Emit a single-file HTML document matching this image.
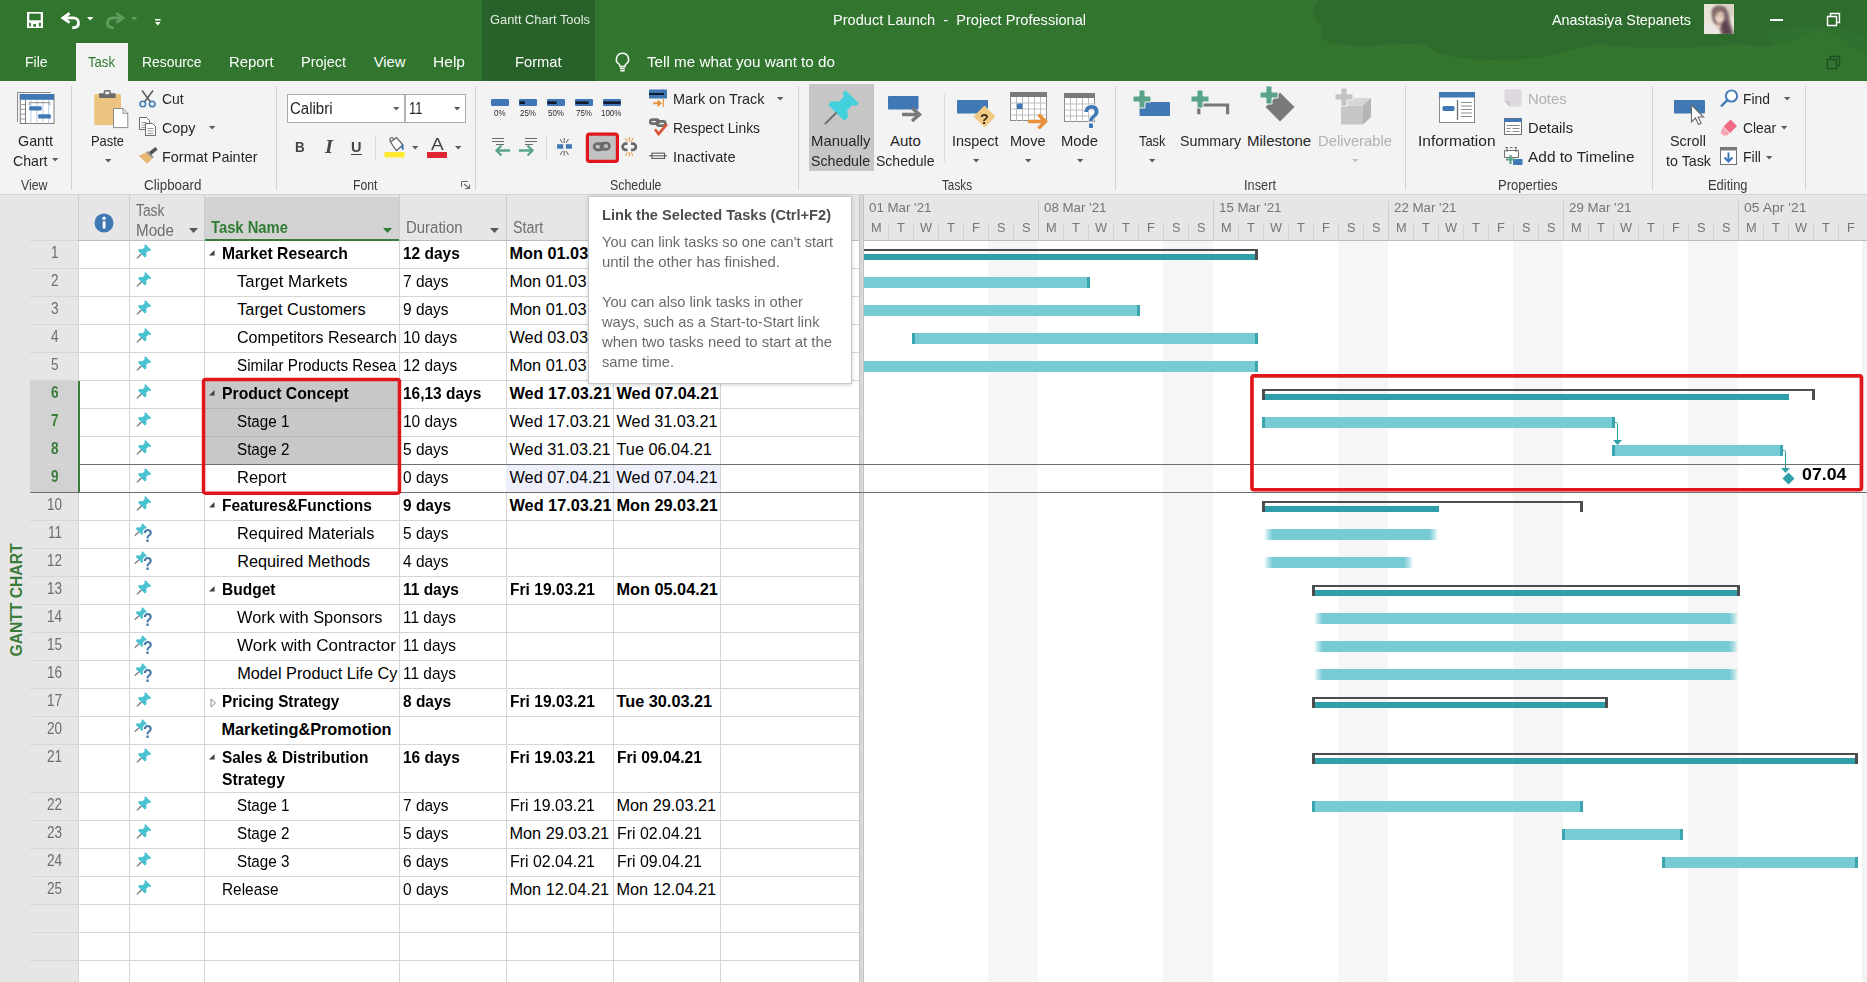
<!DOCTYPE html>
<html lang="en"><head><meta charset="utf-8"><title>Product Launch - Project Professional</title><style>
html,body{margin:0;padding:0;}
body{width:1867px;height:982px;overflow:hidden;position:relative;background:#fff;font-family:"Liberation Sans",sans-serif;}
.b{position:absolute;display:block;}
.t{position:absolute;white-space:pre;line-height:1;transform-origin:0 50%;display:block;}
</style></head><body>
<div class="b" style="left:0px;top:0px;width:1867px;height:81px;background:#31752f;"></div>
<div class="b" style="left:0px;top:81px;width:1867px;height:113px;background:#f3f3f3;"></div>
<div class="b" style="left:0px;top:194px;width:1867px;height:1px;background:#d2d2d2;"></div>
<div class="b" style="left:0px;top:195px;width:1867px;height:787px;background:#e6e6e6;"></div>
<svg class="b" style="left:1300px;top:0px;" width="567" height="81" viewBox="0 0 567 81">
<path d="M18 0 C10 10 14 22 24 26 C16 34 22 44 40 44 C70 50 100 40 128 46 C140 60 190 62 236 58 C262 54 280 46 300 44 C340 50 400 48 440 44 C470 50 500 40 520 30 C540 36 556 52 567 58 L567 0Z" fill="#2c692b" opacity=".72"/>
<path d="M470 30 C500 24 540 26 567 36 L567 60 C540 50 500 56 480 46 C468 40 464 34 470 30Z" fill="#31752f" opacity=".5"/>
</svg>
<div class="b" style="left:482px;top:0px;width:113px;height:81px;background:#28612a;"></div>
<span class="t" style="left:489.5px;top:13.1px;font-size:13.6px;color:#e3efe3;transform:scaleX(0.9472);">Gantt Chart Tools</span>
<span class="t" style="left:833.0px;top:11.9px;font-size:15px;color:#fff;transform:scaleX(0.9726);">Product Launch  -  Project Professional</span>
<span class="t" style="left:1552.0px;top:11.9px;font-size:15px;color:#fff;transform:scaleX(0.9581);">Anastasiya Stepanets</span>
<svg class="b" style="left:1704px;top:4px;" width="30" height="30" viewBox="0 0 30 30">
<rect width="30" height="30" fill="#e9e3d6"/>
<g><g style="filter:blur(.8px)">
<rect x="20" y="0" width="10" height="12" fill="#d9d2c2"/>
<path d="M8 6 C9 1 20 -1 23 6 C26 12 25 18 28 24 L30 31 L16 31 C17 26 15 22 12 21 C8 18 7 11 8 6Z" fill="#7d6468"/>
<path d="M17 22 C19 25 20 28 19 31 L27 31 C26 26 24 20 22 16Z" fill="#5a4350"/>
<ellipse cx="15.500" cy="13" rx="4.600" ry="6.300" fill="#ecd2c0"/>
<path d="M10 7 C12 4 18 4 21 8 C18 7 13 8 11 12Z" fill="#8d7370"/>
<path d="M0 20 C4 17 9 19 12 22 C15 24 17 27 17 31 L0 31Z" fill="#ebe6e1"/>
<path d="M11 19 C13 21 16 21 17 20 L17 24 L12 23Z" fill="#e3c4b2"/>
<path d="M12.500 11.500h2M16.500 11.500h2" stroke="#5a4040" stroke-width="0.800"/>
</g></g></svg>
<div class="b" style="left:1770px;top:19px;width:13px;height:1.5px;background:#fff;"></div>
<svg class="b" style="left:1826px;top:12px;" width="15" height="15" viewBox="0 0 15 15"><path d="M1.5 4.5h9v9h-9z M4.5 4.5v-3h9v9h-3" fill="none" stroke="#fff" stroke-width="1.4"/></svg>
<svg class="b" style="left:1826px;top:55px;" width="15" height="15" viewBox="0 0 15 15"><path d="M1.5 4.5h9v9h-9z M4.5 4.5v-3h9v9h-3" fill="none" stroke="#1f4f20" stroke-width="1.4"/></svg>
<svg class="b" style="left:27px;top:12px;" width="16" height="16" viewBox="0 0 16 16"><rect width="16" height="16" fill="#fff"/><rect x="2.300" y="1.600" width="11.400" height="6.700" fill="#31752f"/><rect x="2.100" y="10.700" width="1.800" height="3.700" fill="#31752f"/><rect x="11.800" y="10.700" width="2.100" height="3.700" fill="#31752f"/><rect x="6.300" y="12.100" width="2.700" height="2.700" fill="#31752f"/></svg>
<svg class="b" style="left:60px;top:12px;" width="22" height="18" viewBox="0 0 22 18"><path d="M9.600 1.200 L3 5.900 L9.600 10.600" fill="none" stroke="#fff" stroke-width="2.900" stroke-linejoin="miter"/><path d="M3.500 5.900H13.500a5 5 0 0 1 5 5c0 3-2.500 4.800-6.200 4.800" fill="none" stroke="#fff" stroke-width="2.900"/></svg>
<svg class="b" style="left:87px;top:17px;" width="7" height="4" viewBox="0 0 7 4"><path d="M0 0h6.400l-3.200 3.400z" fill="#fff"/></svg>
<svg class="b" style="left:104px;top:12px;" width="22" height="18" viewBox="0 0 22 18"><path d="M12.400 1.200 L19 5.900 L12.400 10.600" fill="none" stroke="#5f9d5e" stroke-width="2.900"/><path d="M18.500 5.900H8.500a5 5 0 0 0 -5 5c0 3 2.500 4.800 6.200 4.800" fill="none" stroke="#5f9d5e" stroke-width="2.900"/></svg>
<svg class="b" style="left:131px;top:17px;" width="7" height="4" viewBox="0 0 7 4"><path d="M0 0h6.400l-3.200 3.400z" fill="#5f9d5e"/></svg>
<svg class="b" style="left:154.5px;top:18.8px;" width="7" height="8" viewBox="0 0 7 8"><path d="M0 0h5.600v1.400h-5.600z M0 3h5.600l-2.800 3.400z" fill="#fff"/></svg>
<div class="b" style="left:76px;top:43px;width:52px;height:38px;background:#f3f3f3;"></div>
<span class="t" style="left:25.0px;top:54.5px;font-size:14.8px;color:#fff;transform:scaleX(0.9435);">File</span>
<span class="t" style="left:88.0px;top:54.5px;font-size:14.8px;color:#2f7a32;transform:scaleX(0.8873);">Task</span>
<span class="t" style="left:142.0px;top:54.5px;font-size:14.8px;color:#fff;transform:scaleX(0.9394);">Resource</span>
<span class="t" style="left:229.0px;top:54.5px;font-size:14.8px;color:#fff;transform:scaleX(1.0063);">Report</span>
<span class="t" style="left:301.0px;top:54.5px;font-size:14.8px;color:#fff;transform:scaleX(0.9770);">Project</span>
<span class="t" style="left:373.7px;top:54.5px;font-size:14.8px;color:#fff;">View</span>
<span class="t" style="left:433.0px;top:54.5px;font-size:14.8px;color:#fff;transform:scaleX(1.0513);">Help</span>
<span class="t" style="left:514.5px;top:54.5px;font-size:14.8px;color:#fff;transform:scaleX(0.9922);">Format</span>
<span class="t" style="left:646.5px;top:54.5px;font-size:14.8px;color:#fff;transform:scaleX(1.0295);">Tell me what you want to do</span>
<svg class="b" style="left:614px;top:52px;" width="17" height="21" viewBox="0 0 17 21"><path d="M8.5 1.2a6 6 0 0 0-3.4 11c.7.6 1 1.3 1 2.3h4.8c0-1 .3-1.7 1-2.3a6 6 0 0 0-3.4-11z" fill="none" stroke="#fff" stroke-width="1.5"/><path d="M6 16.5h5M6.3 18.8h4.4" stroke="#fff" stroke-width="1.4"/></svg>
<div class="b" style="left:71px;top:86px;width:1px;height:104px;background:#d4d4d4;"></div>
<div class="b" style="left:276px;top:86px;width:1px;height:104px;background:#d4d4d4;"></div>
<div class="b" style="left:475px;top:86px;width:1px;height:104px;background:#d4d4d4;"></div>
<div class="b" style="left:798px;top:86px;width:1px;height:104px;background:#d4d4d4;"></div>
<div class="b" style="left:1115px;top:86px;width:1px;height:104px;background:#d4d4d4;"></div>
<div class="b" style="left:1405px;top:86px;width:1px;height:104px;background:#d4d4d4;"></div>
<div class="b" style="left:1652px;top:86px;width:1px;height:104px;background:#d4d4d4;"></div>
<div class="b" style="left:1805px;top:86px;width:1px;height:104px;background:#d4d4d4;"></div>
<div class="b" style="left:375px;top:135px;width:1px;height:26px;background:#dcdcdc;"></div>
<div class="b" style="left:546px;top:135px;width:1px;height:26px;background:#dcdcdc;"></div>
<div class="b" style="left:944px;top:94px;width:1px;height:68px;background:#dcdcdc;"></div>
<span class="t" style="left:21.0px;top:177.9px;font-size:14.3px;color:#3b3b3b;transform:scaleX(0.8622);">View</span>
<span class="t" style="left:144.0px;top:177.9px;font-size:14.3px;color:#3b3b3b;transform:scaleX(0.9395);">Clipboard</span>
<span class="t" style="left:353.0px;top:177.9px;font-size:14.3px;color:#3b3b3b;transform:scaleX(0.8563);">Font</span>
<span class="t" style="left:610.0px;top:177.9px;font-size:14.3px;color:#3b3b3b;transform:scaleX(0.8637);">Schedule</span>
<span class="t" style="left:941.5px;top:177.9px;font-size:14.3px;color:#3b3b3b;transform:scaleX(0.8207);">Tasks</span>
<span class="t" style="left:1244.0px;top:177.9px;font-size:14.3px;color:#3b3b3b;transform:scaleX(0.8948);">Insert</span>
<span class="t" style="left:1498.0px;top:177.9px;font-size:14.3px;color:#3b3b3b;transform:scaleX(0.9130);">Properties</span>
<span class="t" style="left:1708.0px;top:177.9px;font-size:14.3px;color:#3b3b3b;transform:scaleX(0.9034);">Editing</span>
<svg class="b" style="left:461px;top:181px;" width="10" height="9" viewBox="0 0 10 9"><path d="M0.500 6V0.500H7" fill="none" stroke="#6a6a6a"/><path d="M3 3L8.500 7.500M8.500 3.600V7.500H4.200" fill="none" stroke="#6a6a6a" stroke-width="1.100"/></svg>
<svg class="b" style="left:17px;top:92px;" width="38" height="33" viewBox="0 0 38 33"><path d="M0.500 30V0.500H33.500" fill="none" stroke="#8b8b8b"/>
<rect x="3.300" y="2.500" width="33.700" height="29" fill="#fff" stroke="#7c7c7c"/>
<rect x="2.800" y="2" width="34.200" height="5.800" fill="#3f78b5"/>
<path d="M13.900 8v23.500M19.900 8v23.500M25.900 8v23.500M31.700 8v23.500" stroke="#b4cbe6" fill="none"/>
<path d="M3.500 12.600h5M3.500 17.400h5M3.500 22.200h5M3.500 27h5" stroke="#9a9a9a" fill="none"/><path d="M8.500 8v23.500" stroke="#7c7c7c"/>
<path d="M12.200 13.200V10.700H32.800V13.200" fill="none" stroke="#8b8b8b"/>
<rect x="12.200" y="14.300" width="12.500" height="4.100" rx="1.200" fill="#3f78b5"/><rect x="21.200" y="22.200" width="12.700" height="4.400" rx="1.200" fill="#3f78b5"/></svg>
<span class="t" style="left:18.0px;top:133.3px;font-size:15px;color:#262626;transform:scaleX(0.9541);">Gantt</span>
<span class="t" style="left:13.0px;top:152.8px;font-size:15px;color:#262626;transform:scaleX(0.9406);">Chart</span>
<svg class="b" style="left:52px;top:158px;" width="7" height="4" viewBox="0 0 7 4"><path d="M0 0h6.4l-3.2 3.4z" fill="#5b5b5b"/></svg>
<svg class="b" style="left:93px;top:89px;" width="36" height="40" viewBox="0 0 36 40"><rect x="1.300" y="5.100" width="26.700" height="31" rx="1.500" fill="#ecc37f"/><rect x="6" y="4.200" width="16.700" height="4.800" rx="0.800" fill="#6d6d6d"/><rect x="11.500" y="1.700" width="5.400" height="4.300" rx="0.800" fill="#f3f3f3" stroke="#6d6d6d" stroke-width="1.500"/>
<path d="M20.500 19.500h9.500l4.800 4.800v14.300h-14.300z" fill="#fff" stroke="#8a8a8a"/><path d="M30 19.500v4.800h4.800" fill="none" stroke="#8a8a8a"/></svg>
<span class="t" style="left:91.0px;top:133.3px;font-size:15px;color:#262626;transform:scaleX(0.8604);">Paste</span>
<svg class="b" style="left:105px;top:159px;" width="7" height="4" viewBox="0 0 7 4"><path d="M0 0h6.4l-3.2 3.4z" fill="#5b5b5b"/></svg>
<svg class="b" style="left:139px;top:90px;" width="17" height="18" viewBox="0 0 17 18"><path d="M3 0.5L11.5 12M14 0.5L5.5 12" stroke="#5f5f5f" stroke-width="1.6" fill="none"/><circle cx="3.8" cy="14" r="2.8" fill="none" stroke="#3f78b5" stroke-width="1.5"/><circle cx="13.2" cy="14" r="2.8" fill="none" stroke="#3f78b5" stroke-width="1.5"/></svg>
<span class="t" style="left:162.0px;top:91.3px;font-size:15px;color:#262626;transform:scaleX(0.9297);">Cut</span>
<svg class="b" style="left:139px;top:117px;" width="18" height="19" viewBox="0 0 18 19"><path d="M0.5 0.5h7l3 3v9h-10z" fill="#fff" stroke="#6b6b6b"/><path d="M2.5 5.5h5M2.5 8h5M2.5 10.500h5" stroke="#8a8a8a" stroke-width=".9"/><path d="M6.5 6.500h7l3 3v9h-10z" fill="#fff" stroke="#6b6b6b"/><path d="M8.5 11.500h6M8.500 14h6M8.500 16.500h6" stroke="#8a8a8a" stroke-width=".9"/></svg>
<span class="t" style="left:162.0px;top:119.8px;font-size:15px;color:#262626;transform:scaleX(0.9567);">Copy</span>
<svg class="b" style="left:209px;top:126px;" width="7" height="4" viewBox="0 0 7 4"><path d="M0 0h6.4l-3.2 3.4z" fill="#5b5b5b"/></svg>
<svg class="b" style="left:138px;top:146px;" width="21" height="19" viewBox="0 0 21 19"><path d="M8.300 6.200 L14.300 12.400 L9 17.700 L0.700 9.800 Z" fill="#e6b873"/><path d="M9.600 4.900 L15.600 11.100 L14.300 12.400 L8.300 6.200Z" fill="#8a8a8a"/><path d="M12 7.500 L18.500 2.300" stroke="#555" stroke-width="3.600" fill="none"/></svg>
<span class="t" style="left:162.0px;top:149.3px;font-size:15px;color:#262626;transform:scaleX(0.9628);">Format Painter</span>
<div class="b" style="left:287px;top:94px;width:179px;height:29px;background:#fff;border:1px solid #ababab;box-sizing:border-box;"></div>
<div class="b" style="left:404px;top:95px;width:2px;height:27px;background:#b4b4b4;"></div>
<span class="t" style="left:290.0px;top:100.5px;font-size:16px;color:#262626;transform:scaleX(0.9373);">Calibri</span>
<span class="t" style="left:409.0px;top:100.5px;font-size:16px;color:#262626;transform:scaleX(0.8129);">11</span>
<svg class="b" style="left:392.5px;top:107px;" width="7" height="4" viewBox="0 0 7 4"><path d="M0 0h6.4l-3.2 3.4z" fill="#5b5b5b"/></svg>
<svg class="b" style="left:454px;top:107px;" width="7" height="4" viewBox="0 0 7 4"><path d="M0 0h6.4l-3.2 3.4z" fill="#5b5b5b"/></svg>
<span class="t" style="left:295.0px;top:138.9px;font-size:15.5px;color:#444;font-weight:bold;transform:scaleX(0.8665);">B</span>
<span class="t" style="left:324.5px;top:137.6px;font-size:18px;color:#444;font-weight:bold;font-style:italic;font-family:'Liberation Serif',serif;transform:scaleX(1.1419);">I</span>
<span class="t" style="left:351.0px;top:138.9px;font-size:15.5px;color:#444;font-weight:bold;transform:scaleX(0.9380);">U</span>
<div class="b" style="left:351px;top:154px;width:10.5px;height:1.4px;background:#444;"></div>
<svg class="b" style="left:384px;top:136px;" width="22" height="22" viewBox="0 0 22 22"><rect x="0.500" y="16" width="20" height="5.500" fill="#ffe92e"/><path d="M6.500 6l6-4.500 6.500 7.500-6.500 5.500z" fill="#fff" stroke="#5f5f5f" stroke-width="1.200"/><path d="M10 3.500c-2-3.500-5-2-3.800 2" fill="none" stroke="#5f5f5f" stroke-width="1.100"/><path d="M17.500 8c2 1 3 4 1.500 6.500-1.700-1.500-2.200-4-1.500-6.500z" fill="#3f78b5"/></svg>
<svg class="b" style="left:412px;top:146px;" width="7" height="4" viewBox="0 0 7 4"><path d="M0 0h6.4l-3.2 3.4z" fill="#5b5b5b"/></svg>
<span class="t" style="left:430.5px;top:136.1px;font-size:17px;color:#444;transform:scaleX(1.1200);">A</span>
<div class="b" style="left:427px;top:152px;width:20px;height:5.5px;background:#e02633;"></div>
<svg class="b" style="left:455px;top:146px;" width="7" height="4" viewBox="0 0 7 4"><path d="M0 0h6.4l-3.2 3.4z" fill="#5b5b5b"/></svg>
<svg class="b" style="left:491px;top:99.2px;" width="18" height="7.5" viewBox="0 0 18 7.5"><rect x="0" y="0" width="18" height="7" rx="1" fill="#3f78b5"/></svg>
<span class="t" style="left:494.2px;top:108.6px;font-size:8.3px;color:#2a2a2a;transform:scaleX(0.9600);">0%</span>
<svg class="b" style="left:519px;top:99.2px;" width="18" height="7.5" viewBox="0 0 18 7.5"><rect x="0" y="0" width="18" height="7" rx="1" fill="#3f78b5"/><rect x="0.500" y="2.400" width="5.5" height="2.600" fill="#111a2c"/></svg>
<span class="t" style="left:520.0px;top:108.6px;font-size:8.3px;color:#2a2a2a;transform:scaleX(0.9600);">25%</span>
<svg class="b" style="left:546.5px;top:99.2px;" width="18" height="7.5" viewBox="0 0 18 7.5"><rect x="0" y="0" width="18" height="7" rx="1" fill="#3f78b5"/><rect x="0.500" y="2.400" width="9" height="2.600" fill="#111a2c"/></svg>
<span class="t" style="left:547.5px;top:108.6px;font-size:8.3px;color:#2a2a2a;transform:scaleX(0.9600);">50%</span>
<svg class="b" style="left:574.5px;top:99.2px;" width="18" height="7.5" viewBox="0 0 18 7.5"><rect x="0" y="0" width="18" height="7" rx="1" fill="#3f78b5"/><rect x="0.500" y="2.400" width="13" height="2.600" fill="#111a2c"/></svg>
<span class="t" style="left:575.5px;top:108.6px;font-size:8.3px;color:#2a2a2a;transform:scaleX(0.9600);">75%</span>
<svg class="b" style="left:602.5px;top:99.2px;" width="18" height="7.5" viewBox="0 0 18 7.5"><rect x="0" y="0" width="18" height="7" rx="1" fill="#3f78b5"/><rect x="0.500" y="2.400" width="17" height="2.600" fill="#111a2c"/></svg>
<span class="t" style="left:601.3px;top:108.6px;font-size:8.3px;color:#2a2a2a;transform:scaleX(0.9600);">100%</span>
<svg class="b" style="left:491px;top:137px;" width="20" height="20" viewBox="0 0 20 20"><path d="M1 1.500h12M1 4.500h12M5 7.500h8" stroke="#6a6a6a" stroke-width="1.100"/><path d="M19 13.500H6M10.500 8.500L5.500 13.500L10.500 18.500" fill="none" stroke="#5aa58a" stroke-width="2.300"/></svg>
<svg class="b" style="left:518px;top:137px;" width="20" height="20" viewBox="0 0 20 20"><path d="M7 1.500h12M7 4.500h12M7 7.500h8" stroke="#6a6a6a" stroke-width="1.100"/><path d="M1 13.500h13M9.500 8.500L14.500 13.500L9.500 18.500" fill="none" stroke="#5aa58a" stroke-width="2.300"/></svg>
<svg class="b" style="left:556px;top:138px;" width="17" height="18" viewBox="0 0 17 18"><rect x="1.100" y="6.200" width="6.100" height="4.500" fill="#3f78b5"/><rect x="9.900" y="6.200" width="6" height="4.500" fill="#3f78b5"/><path d="M8.200 0v5M8.200 12.500v5M4 1l2.500 4M12.500 1l-2.500 4M4 17l2.500-4M12.500 17l-2.500-4" stroke="#5f5f5f" stroke-width="1" fill="none"/></svg>
<div class="b" style="left:589px;top:135px;width:27px;height:26px;background:#c2c2c2;"></div>
<svg class="b" style="left:592px;top:140px;" width="21" height="13" viewBox="0 0 21 13"><rect x="2.150" y="3.500" width="9" height="6.300" rx="3.150" fill="none" stroke="#6a6a6a" stroke-width="2.700"/><rect x="8.950" y="3" width="8.500" height="6.300" rx="3.150" fill="none" stroke="#6a6a6a" stroke-width="2.700"/><path d="M7.600 3.400L12.200 9.400" stroke="#6a6a6a" stroke-width="3.600"/><path d="M6.200 7.600L8.100 5.200M11.600 7.900L13.500 5.400" stroke="#c2c2c2" stroke-width="1"/></svg>
<svg class="b" style="left:620px;top:137px;" width="19" height="20" viewBox="0 0 19 20"><path d="M7.500 6.700h-1.800a3.100 3.100 0 0 0 0 6.200h1.800M11 6.700h1.800a3.100 3.100 0 0 1 0 6.200h-1.800" fill="none" stroke="#686868" stroke-width="2.700"/><path d="M9.300 0v4.500M9.300 15v4.500M5.500 1l1.700 3.500M13 1l-1.700 3.500M5.500 19l1.700-3.500M13 19l-1.700-3.500" stroke="#e8913a" stroke-width="1" fill="none"/></svg>
<svg class="b" style="left:649px;top:89px;" width="19" height="19" viewBox="0 0 19 19"><path d="M14.400 0v2" stroke="#e8913a" stroke-width="1"/><rect x="0" y="0.500" width="18" height="9" fill="#3f78b5"/><rect x="0" y="4" width="15" height="1.900" fill="#0d1628"/><path d="M14.400 9.500v8.500" stroke="#e8913a" stroke-width="1.100"/><path d="M4.200 14.300h7.600M8.600 11.600l3 2.700-3 2.700" fill="none" stroke="#e8913a" stroke-width="1.900"/></svg>
<span class="t" style="left:672.5px;top:91.3px;font-size:15px;color:#262626;transform:scaleX(0.9630);">Mark on Track</span>
<svg class="b" style="left:776.5px;top:97px;" width="7" height="4" viewBox="0 0 7 4"><path d="M0 0h6.4l-3.2 3.4z" fill="#5b5b5b"/></svg>
<svg class="b" style="left:649px;top:117px;" width="19" height="20" viewBox="0 0 19 20"><rect x="1.150" y="2.550" width="8.500" height="4.100" rx="2.050" fill="none" stroke="#6e6e6e" stroke-width="2.700"/><rect x="7.850" y="4.350" width="8.500" height="4.200" rx="2.100" fill="none" stroke="#6e6e6e" stroke-width="2.700"/><path d="M6 12.300l3.600 4.700 8.400-9.800" fill="none" stroke="#d9583c" stroke-width="2.700"/></svg>
<span class="t" style="left:672.5px;top:119.8px;font-size:15px;color:#262626;transform:scaleX(0.9235);">Respect Links</span>
<svg class="b" style="left:649px;top:152px;" width="18" height="8" viewBox="0 0 18 8"><rect x="2.900" y="1.200" width="12.600" height="5.200" fill="#fff" stroke="#555" stroke-width="1.100"/><path d="M0 3.800h18" stroke="#555" stroke-width="1.100"/></svg>
<span class="t" style="left:672.5px;top:149.3px;font-size:15px;color:#262626;transform:scaleX(0.9735);">Inactivate</span>
<div class="b" style="left:809px;top:84px;width:65px;height:87px;background:#c6c6c6;"></div>
<svg class="b" style="left:824px;top:90px;" width="35" height="35" viewBox="0 0 16 16"><path d="M9.9 0.200 L15.800 6.100 Q15.300 7.600 13.800 7.100 L12.900 6.900 L10.600 9.200 L10.900 12.600 L9.200 14 L2 6.800 L3.400 5.100 L6.800 5.400 L9.100 3.100 L8.900 2.200 Q8.400 0.700 9.900 0.200Z" fill="#41d0dc"/><path d="M5.700 10.300 L0.400 15.600" stroke="#6f6f6f" stroke-width="0.900" fill="none"/></svg>
<span class="t" style="left:811.0px;top:133.3px;font-size:15px;color:#262626;transform:scaleX(0.9912);">Manually</span>
<span class="t" style="left:811.0px;top:152.8px;font-size:15px;color:#262626;transform:scaleX(0.9433);">Schedule</span>
<svg class="b" style="left:888px;top:96px;" width="36" height="26" viewBox="0 0 36 26"><rect x="0" y="0" width="30.500" height="13.500" rx="1" fill="#3f78b5"/><path d="M14 18.500h15M24 12l7.500 6.500-7.500 6.500" fill="none" stroke="#7a7a7a" stroke-width="3.400"/></svg>
<span class="t" style="left:890.0px;top:133.3px;font-size:15px;color:#262626;">Auto</span>
<span class="t" style="left:876.0px;top:152.8px;font-size:15px;color:#262626;transform:scaleX(0.9353);">Schedule</span>
<svg class="b" style="left:957px;top:100px;" width="40" height="29" viewBox="0 0 40 29"><rect x="0" y="0" width="31" height="13.500" rx="1" fill="#3f78b5"/><path d="M27.500 5.500l11 11-11 11-11-11z" fill="#f1cb86"/></svg>
<span class="t" style="left:979.5px;top:110.8px;font-size:15px;color:#3a2c12;font-weight:bold;transform:scaleX(0.9500);">?</span>
<span class="t" style="left:952.0px;top:133.3px;font-size:15px;color:#262626;transform:scaleX(0.9616);">Inspect</span>
<svg class="b" style="left:973px;top:159px;" width="7" height="4" viewBox="0 0 7 4"><path d="M0 0h6.4l-3.2 3.4z" fill="#5b5b5b"/></svg>
<svg class="b" style="left:1010px;top:92px;" width="40" height="37" viewBox="0 0 40 37"><rect x="0.500" y="0.500" width="36" height="28" fill="#fff" stroke="#8b8b8b"/><rect x="0" y="0" width="37" height="5" fill="#7a7a7a"/><path d="M0.500 11h36M0.500 17h36M0.500 23h36M6.500 5v24M12.500 5v24M18.500 5v24M24.500 5v24M30.500 5v24" stroke="#bdbdbd" fill="none"/><rect x="7" y="11.500" width="5.500" height="5.500" fill="#3f78b5"/><path d="M18 29.500h17M28.500 22.500l7 7-7 7" fill="none" stroke="#e8913a" stroke-width="3.400"/></svg>
<span class="t" style="left:1010.0px;top:133.3px;font-size:15px;color:#262626;transform:scaleX(0.9679);">Move</span>
<svg class="b" style="left:1025px;top:159px;" width="7" height="4" viewBox="0 0 7 4"><path d="M0 0h6.4l-3.2 3.4z" fill="#5b5b5b"/></svg>
<svg class="b" style="left:1064px;top:93px;" width="38" height="37" viewBox="0 0 38 37"><rect x="0.500" y="0.500" width="30" height="28" fill="#fff" stroke="#8b8b8b"/><rect x="0" y="0" width="31" height="5" fill="#7a7a7a"/><path d="M0.500 11h30M0.500 17h30M0.500 23h30M6.500 5v24M12.500 5v24M18.500 5v24M24.500 5v24" stroke="#bdbdbd" fill="none"/></svg>
<span class="t" style="left:1082.5px;top:99.5px;font-size:33px;color:#3f78b5;font-weight:bold;transform:scaleX(0.8500);text-shadow:0 0 2px #f3f3f3,0 0 2px #f3f3f3,1px 0 1px #f3f3f3,-1px 0 1px #f3f3f3;">?</span>
<span class="t" style="left:1061.0px;top:133.3px;font-size:15px;color:#262626;transform:scaleX(0.9862);">Mode</span>
<svg class="b" style="left:1077px;top:159px;" width="7" height="4" viewBox="0 0 7 4"><path d="M0 0h6.4l-3.2 3.4z" fill="#5b5b5b"/></svg>
<svg class="b" style="left:1133px;top:89.5px;" width="38" height="27" viewBox="0 0 38 27"><rect x="6.500" y="12" width="30.500" height="14" rx="1" fill="#3f78b5"/><path d="M6 0h6v6h6v6h-6v6h-6v-6h-6v-6h6z" fill="#5aa58a" stroke="#f3f3f3" stroke-width="1"/></svg>
<span class="t" style="left:1138.5px;top:133.3px;font-size:15px;color:#262626;transform:scaleX(0.8592);">Task</span>
<svg class="b" style="left:1149px;top:159px;" width="7" height="4" viewBox="0 0 7 4"><path d="M0 0h6.4l-3.2 3.4z" fill="#5b5b5b"/></svg>
<svg class="b" style="left:1191px;top:89.5px;" width="39" height="27" viewBox="0 0 39 27"><path d="M7.800 24.300V15H36.600V24.300" fill="none" stroke="#777" stroke-width="3.200"/><path d="M6 0h6v6h6v6h-6v6h-6v-6h-6v-6h6z" fill="#5aa58a" stroke="#f3f3f3" stroke-width="1"/></svg>
<span class="t" style="left:1180.0px;top:133.3px;font-size:15px;color:#262626;transform:scaleX(0.9506);">Summary</span>
<svg class="b" style="left:1260px;top:86.2px;" width="36" height="36" viewBox="0 0 36 36"><path d="M20 6.500l14.500 14.500-14.500 14.500-14.500-14.500z" fill="#7a7a7a"/><path d="M6 0h6v6h6v6h-6v6h-6v-6h-6v-6h6z" fill="#5aa58a" stroke="#f3f3f3" stroke-width="1"/></svg>
<span class="t" style="left:1247.0px;top:133.3px;font-size:15px;color:#262626;">Milestone</span>
<svg class="b" style="left:1335px;top:87.5px;" width="38" height="38" viewBox="0 0 38 38"><path d="M6 17.500h22v19h-22z" fill="#c6c6c6"/><path d="M6 17.500l8-7.500h22l-8 7.500z" fill="#d6d6d6"/><path d="M28 17.500l8-7.500v19l-8 7.500z" fill="#b5b5b5"/><path d="M6 0h6v6h6v6h-6v6h-6v-6h-6v-6h6z" fill="#c2c2c2" stroke="#f3f3f3" stroke-width="1"/></svg>
<span class="t" style="left:1318.0px;top:133.3px;font-size:15px;color:#b1b1b1;transform:scaleX(0.9862);">Deliverable</span>
<svg class="b" style="left:1352px;top:159px;" width="7" height="4" viewBox="0 0 7 4"><path d="M0 0h6.4l-3.2 3.4z" fill="#c0c0c0"/></svg>
<svg class="b" style="left:1439px;top:92px;" width="36" height="31" viewBox="0 0 36 31"><rect x="0.500" y="0.500" width="35" height="30" fill="#fff" stroke="#8b8b8b"/><rect x="0" y="0" width="36" height="5.500" fill="#3f78b5"/><rect x="3.500" y="14" width="12" height="5" rx="1.500" fill="#3f78b5"/><path d="M18.500 8v20" stroke="#6f6f6f" stroke-width="1.300"/><path d="M22 10.500h11M22 14h11M22 17.500h11M22 21h11M22 24.500h11" stroke="#8b8b8b" stroke-width="1"/></svg>
<span class="t" style="left:1418.0px;top:133.3px;font-size:15px;color:#262626;transform:scaleX(1.0329);">Information</span>
<svg class="b" style="left:1504px;top:89px;" width="18" height="18" viewBox="0 0 18 18"><path d="M0.500 0.500h17v17h-12l-5-5z" fill="#dcd8dd"/><path d="M0.500 12.500h5v5z" fill="#c8c4c9"/></svg>
<span class="t" style="left:1527.5px;top:91.3px;font-size:15px;color:#b1b1b1;transform:scaleX(0.9826);">Notes</span>
<svg class="b" style="left:1504px;top:118px;" width="18" height="17" viewBox="0 0 18 17"><rect x="0.500" y="0.500" width="17" height="16" fill="#fff" stroke="#6f6f6f"/><rect x="0.500" y="0.500" width="17" height="3.500" fill="#3f78b5"/><path d="M2.500 7.500h13M2.500 10.500h4M8.500 10.500h7M2.500 13.500h4M8.500 13.500h7" stroke="#8b8b8b" stroke-width="1"/></svg>
<span class="t" style="left:1527.5px;top:119.8px;font-size:15px;color:#262626;transform:scaleX(0.9815);">Details</span>
<svg class="b" style="left:1504px;top:147px;" width="19" height="19" viewBox="0 0 19 19"><path d="M1.500 0.500h12" stroke="#6f6f6f" stroke-dasharray="2.500 2"/><path d="M0.500 3.500h14v7h-14z" fill="#fff" stroke="#6f6f6f"/><path d="M3 0v5M12 0v5" stroke="#6f6f6f"/><rect x="9" y="12" width="9.500" height="6" rx="1" fill="#3f78b5"/><path d="M6.500 8v9M2 12.500h9" stroke="#5aa58a" stroke-width="2.200"/></svg>
<span class="t" style="left:1527.5px;top:149.3px;font-size:15px;color:#262626;transform:scaleX(1.0302);">Add to Timeline</span>
<svg class="b" style="left:1674px;top:100px;" width="32" height="26" viewBox="0 0 32 26"><rect x="0" y="0" width="31" height="13.500" rx="1" fill="#3f78b5"/><path d="M17.500 5v17l4-4 3 6.500 2.600-1.200-3-6.300h5.400z" fill="#fff" stroke="#6a6a6a" stroke-width="1.100"/></svg>
<span class="t" style="left:1670.0px;top:133.3px;font-size:15px;color:#262626;transform:scaleX(0.9598);">Scroll</span>
<span class="t" style="left:1666.0px;top:152.8px;font-size:15px;color:#262626;transform:scaleX(0.9525);">to Task</span>
<svg class="b" style="left:1720px;top:89px;" width="19" height="19" viewBox="0 0 19 19"><circle cx="11.500" cy="7" r="5.600" fill="#fff" stroke="#3f78b5" stroke-width="1.900"/><path d="M7.500 11l-6.500 6.500" stroke="#3f78b5" stroke-width="2.400"/></svg>
<span class="t" style="left:1743.0px;top:91.3px;font-size:15px;color:#262626;transform:scaleX(0.9254);">Find</span>
<svg class="b" style="left:1784px;top:97px;" width="7" height="4" viewBox="0 0 7 4"><path d="M0 0h6.4l-3.2 3.4z" fill="#5b5b5b"/></svg>
<svg class="b" style="left:1720px;top:119px;" width="18" height="17" viewBox="0 0 18 17"><path d="M10.500 0.500l6.500 6.500-7 7-6.500-6.500z" fill="#f06a84"/><path d="M3 8l6.500 6.500-2.500 2h-3.500l-3-3z" fill="#f7a6b4"/></svg>
<span class="t" style="left:1743.0px;top:119.8px;font-size:15px;color:#262626;transform:scaleX(0.9207);">Clear</span>
<svg class="b" style="left:1781px;top:126px;" width="7" height="4" viewBox="0 0 7 4"><path d="M0 0h6.4l-3.2 3.4z" fill="#5b5b5b"/></svg>
<svg class="b" style="left:1720px;top:147px;" width="18" height="18" viewBox="0 0 18 18"><rect x="0.500" y="0.500" width="16" height="17" fill="#fff" stroke="#6f6f6f"/><rect x="0.500" y="0.500" width="16" height="3" fill="#7a7a7a"/><path d="M8.500 5.500v9M4.500 10.500l4 4 4-4" fill="none" stroke="#3f78b5" stroke-width="2"/></svg>
<span class="t" style="left:1743.0px;top:149.3px;font-size:15px;color:#262626;transform:scaleX(0.9394);">Fill</span>
<svg class="b" style="left:1766px;top:155.5px;" width="7" height="4" viewBox="0 0 7 4"><path d="M0 0h6.4l-3.2 3.4z" fill="#5b5b5b"/></svg>
<div class="b" style="left:0px;top:195px;width:30px;height:787px;background:#e6e6e6;"></div>
<span class="t" style="left:15.5px;top:599.5px;font-size:17px;font-weight:bold;color:#3a7d3a;transform:translate(-50%,-50%) rotate(-90deg) scaleX(0.921);transform-origin:50% 50%;">GANTT CHART</span>
<div class="b" style="left:79px;top:241px;width:780px;height:741px;background:#fff;"></div>
<div class="b" style="left:30px;top:197px;width:829px;height:43px;background:#e6e6e6;"></div>
<div class="b" style="left:205px;top:197px;width:194px;height:43px;background:#d2d2d2;"></div>
<div class="b" style="left:205px;top:239px;width:194px;height:2px;background:#3a7d3a;"></div>
<div class="b" style="left:30px;top:240px;width:48px;height:1px;background:#d6d6d6;"></div>
<div class="b" style="left:78px;top:240px;width:127px;height:1px;background:#bdbdbd;"></div>
<div class="b" style="left:399px;top:240px;width:460px;height:1px;background:#bdbdbd;"></div>
<div class="b" style="left:78px;top:195px;width:1px;height:45px;background:#cdcdcd;"></div>
<div class="b" style="left:78px;top:241px;width:1px;height:741px;background:#d6d6d6;"></div>
<div class="b" style="left:129px;top:195px;width:1px;height:45px;background:#cdcdcd;"></div>
<div class="b" style="left:129px;top:241px;width:1px;height:741px;background:#d6d6d6;"></div>
<div class="b" style="left:204px;top:195px;width:1px;height:45px;background:#cdcdcd;"></div>
<div class="b" style="left:204px;top:241px;width:1px;height:741px;background:#d6d6d6;"></div>
<div class="b" style="left:399px;top:195px;width:1px;height:45px;background:#cdcdcd;"></div>
<div class="b" style="left:399px;top:241px;width:1px;height:741px;background:#d6d6d6;"></div>
<div class="b" style="left:506px;top:195px;width:1px;height:45px;background:#cdcdcd;"></div>
<div class="b" style="left:506px;top:241px;width:1px;height:741px;background:#d6d6d6;"></div>
<div class="b" style="left:613px;top:195px;width:1px;height:45px;background:#cdcdcd;"></div>
<div class="b" style="left:613px;top:241px;width:1px;height:741px;background:#d6d6d6;"></div>
<div class="b" style="left:720px;top:195px;width:1px;height:45px;background:#cdcdcd;"></div>
<div class="b" style="left:720px;top:241px;width:1px;height:741px;background:#d6d6d6;"></div>
<svg class="b" style="left:94px;top:213px;" width="20" height="20" viewBox="0 0 20 20"><circle cx="10" cy="10" r="9.5" fill="#3f78b5"/><rect x="8.7" y="8.3" width="2.8" height="7.2" fill="#fff"/><circle cx="10.1" cy="5.2" r="1.7" fill="#fff"/></svg>
<span class="t" style="left:135.5px;top:202.2px;font-size:16.3px;color:#6e6e6e;transform:scaleX(0.8504);">Task</span>
<span class="t" style="left:135.5px;top:222.2px;font-size:16.3px;color:#6e6e6e;transform:scaleX(0.9320);">Mode</span>
<span class="t" style="left:210.5px;top:219.2px;font-size:16.3px;color:#2f7d32;font-weight:bold;transform:scaleX(0.9074);">Task Name</span>
<span class="t" style="left:406.0px;top:219.2px;font-size:16.3px;color:#6e6e6e;transform:scaleX(0.9187);">Duration</span>
<span class="t" style="left:512.5px;top:219.2px;font-size:16.3px;color:#6e6e6e;transform:scaleX(0.8774);">Start</span>
<svg class="b" style="left:189px;top:228px;" width="9" height="5" viewBox="0 0 9 5"><path d="M0 0h9l-4.5 5z" fill="#5a5a5a"/></svg>
<svg class="b" style="left:383px;top:228px;" width="9" height="5" viewBox="0 0 9 5"><path d="M0 0h9l-4.5 5z" fill="#2f7d32"/></svg>
<svg class="b" style="left:490px;top:228px;" width="9" height="5" viewBox="0 0 9 5"><path d="M0 0h9l-4.5 5z" fill="#5a5a5a"/></svg>
<div class="b" style="left:30px;top:268px;width:829px;height:1px;background:#d6d6d6;"></div>
<span class="t" style="left:51.0px;top:245.1px;font-size:15.8px;color:#6e6e6e;transform:scaleX(0.8600);">1</span>
<svg class="b" style="left:135.6px;top:243.6px;" width="15.4" height="15.4" viewBox="0 0 16 16"><path d="M9.9 0.2 L15.8 6.1 Q15.3 7.6 13.8 7.1 L12.9 6.9 L10.6 9.2 L10.9 12.6 L9.2 14 L2 6.8 L3.4 5.1 L6.8 5.4 L9.1 3.1 L8.9 2.2 Q8.4 0.7 9.9 0.2Z" fill="#48c2cf"/><path d="M5.6 10.4 L1 15" stroke="#6f6f6f" stroke-width="1.3" fill="none"/></svg>
<span class="t" style="left:221.5px;top:245.2px;font-size:16.3px;color:#000;font-weight:bold;transform:scaleX(0.9658);">Market Research</span>
<svg class="b" style="left:207.7px;top:248.7px;" width="8" height="8" viewBox="0 0 8 8"><path d="M6.5 1v5.5h-5.5z" fill="#404040"/></svg>
<span class="t" style="left:402.5px;top:245.2px;font-size:16.3px;color:#000;font-weight:bold;transform:scaleX(0.9500);">12 days</span>
<span class="t" style="left:509.5px;top:245.2px;font-size:16.3px;color:#000;font-weight:bold;">Mon 01.03</span>
<div class="b" style="left:30px;top:296px;width:829px;height:1px;background:#d6d6d6;"></div>
<span class="t" style="left:51.0px;top:273.1px;font-size:15.8px;color:#6e6e6e;transform:scaleX(0.8600);">2</span>
<svg class="b" style="left:135.6px;top:271.6px;" width="15.4" height="15.4" viewBox="0 0 16 16"><path d="M9.9 0.2 L15.8 6.1 Q15.3 7.6 13.8 7.1 L12.9 6.9 L10.6 9.2 L10.9 12.6 L9.2 14 L2 6.8 L3.4 5.1 L6.8 5.4 L9.1 3.1 L8.9 2.2 Q8.4 0.7 9.9 0.2Z" fill="#48c2cf"/><path d="M5.6 10.4 L1 15" stroke="#6f6f6f" stroke-width="1.3" fill="none"/></svg>
<span class="t" style="left:237.2px;top:273.2px;font-size:16.3px;color:#000;transform:scaleX(1.0261);">Target Markets</span>
<span class="t" style="left:402.5px;top:273.2px;font-size:16.3px;color:#000;transform:scaleX(0.9500);">7 days</span>
<span class="t" style="left:509.5px;top:273.2px;font-size:16.3px;color:#000;">Mon 01.03</span>
<div class="b" style="left:30px;top:324px;width:829px;height:1px;background:#d6d6d6;"></div>
<span class="t" style="left:51.0px;top:301.1px;font-size:15.8px;color:#6e6e6e;transform:scaleX(0.8600);">3</span>
<svg class="b" style="left:135.6px;top:299.6px;" width="15.4" height="15.4" viewBox="0 0 16 16"><path d="M9.9 0.2 L15.8 6.1 Q15.3 7.6 13.8 7.1 L12.9 6.9 L10.6 9.2 L10.9 12.6 L9.2 14 L2 6.8 L3.4 5.1 L6.8 5.4 L9.1 3.1 L8.9 2.2 Q8.4 0.7 9.9 0.2Z" fill="#48c2cf"/><path d="M5.6 10.4 L1 15" stroke="#6f6f6f" stroke-width="1.3" fill="none"/></svg>
<span class="t" style="left:237.2px;top:301.2px;font-size:16.3px;color:#000;">Target Customers</span>
<span class="t" style="left:402.5px;top:301.2px;font-size:16.3px;color:#000;transform:scaleX(0.9500);">9 days</span>
<span class="t" style="left:509.5px;top:301.2px;font-size:16.3px;color:#000;">Mon 01.03</span>
<div class="b" style="left:30px;top:352px;width:829px;height:1px;background:#d6d6d6;"></div>
<span class="t" style="left:51.0px;top:329.1px;font-size:15.8px;color:#6e6e6e;transform:scaleX(0.8600);">4</span>
<svg class="b" style="left:135.6px;top:327.6px;" width="15.4" height="15.4" viewBox="0 0 16 16"><path d="M9.9 0.2 L15.8 6.1 Q15.3 7.6 13.8 7.1 L12.9 6.9 L10.6 9.2 L10.9 12.6 L9.2 14 L2 6.8 L3.4 5.1 L6.8 5.4 L9.1 3.1 L8.9 2.2 Q8.4 0.7 9.9 0.2Z" fill="#48c2cf"/><path d="M5.6 10.4 L1 15" stroke="#6f6f6f" stroke-width="1.3" fill="none"/></svg>
<span class="t" style="left:237.2px;top:329.2px;font-size:16.3px;color:#000;transform:scaleX(0.9868);">Competitors Research</span>
<span class="t" style="left:402.5px;top:329.2px;font-size:16.3px;color:#000;transform:scaleX(0.9500);">10 days</span>
<span class="t" style="left:509.5px;top:329.2px;font-size:16.3px;color:#000;">Wed 03.03</span>
<div class="b" style="left:30px;top:380px;width:829px;height:1px;background:#d6d6d6;"></div>
<span class="t" style="left:51.0px;top:357.1px;font-size:15.8px;color:#6e6e6e;transform:scaleX(0.8600);">5</span>
<svg class="b" style="left:135.6px;top:355.6px;" width="15.4" height="15.4" viewBox="0 0 16 16"><path d="M9.9 0.2 L15.8 6.1 Q15.3 7.6 13.8 7.1 L12.9 6.9 L10.6 9.2 L10.9 12.6 L9.2 14 L2 6.8 L3.4 5.1 L6.8 5.4 L9.1 3.1 L8.9 2.2 Q8.4 0.7 9.9 0.2Z" fill="#48c2cf"/><path d="M5.6 10.4 L1 15" stroke="#6f6f6f" stroke-width="1.3" fill="none"/></svg>
<span class="t" style="left:237.2px;top:357.2px;font-size:16.3px;color:#000;transform:scaleX(0.9366);">Similar Products Resea</span>
<span class="t" style="left:402.5px;top:357.2px;font-size:16.3px;color:#000;transform:scaleX(0.9500);">12 days</span>
<span class="t" style="left:509.5px;top:357.2px;font-size:16.3px;color:#000;">Mon 01.03</span>
<div class="b" style="left:30px;top:408px;width:829px;height:1px;background:#d6d6d6;"></div>
<div class="b" style="left:30px;top:381px;width:48px;height:27px;background:#d2d2d2;"></div>
<span class="t" style="left:51.0px;top:385.1px;font-size:15.8px;color:#3a7d3a;font-weight:bold;transform:scaleX(0.8600);">6</span>
<svg class="b" style="left:135.6px;top:383.6px;" width="15.4" height="15.4" viewBox="0 0 16 16"><path d="M9.9 0.2 L15.8 6.1 Q15.3 7.6 13.8 7.1 L12.9 6.9 L10.6 9.2 L10.9 12.6 L9.2 14 L2 6.8 L3.4 5.1 L6.8 5.4 L9.1 3.1 L8.9 2.2 Q8.4 0.7 9.9 0.2Z" fill="#48c2cf"/><path d="M5.6 10.4 L1 15" stroke="#6f6f6f" stroke-width="1.3" fill="none"/></svg>
<div class="b" style="left:205px;top:381px;width:194px;height:27px;background:#c8c8c8;"></div>
<div class="b" style="left:205px;top:408px;width:194px;height:1px;background:#b6b6b6;"></div>
<span class="t" style="left:221.5px;top:385.2px;font-size:16.3px;color:#000;font-weight:bold;transform:scaleX(0.9673);">Product Concept</span>
<svg class="b" style="left:207.7px;top:388.7px;" width="8" height="8" viewBox="0 0 8 8"><path d="M6.5 1v5.5h-5.5z" fill="#404040"/></svg>
<span class="t" style="left:402.5px;top:385.2px;font-size:16.3px;color:#000;font-weight:bold;transform:scaleX(0.9500);">16,13 days</span>
<span class="t" style="left:509.5px;top:385.2px;font-size:16.3px;color:#000;font-weight:bold;">Wed 17.03.21</span>
<span class="t" style="left:616.5px;top:385.2px;font-size:16.3px;color:#000;font-weight:bold;">Wed 07.04.21</span>
<div class="b" style="left:30px;top:436px;width:829px;height:1px;background:#d6d6d6;"></div>
<div class="b" style="left:30px;top:409px;width:48px;height:27px;background:#d2d2d2;"></div>
<span class="t" style="left:51.0px;top:413.1px;font-size:15.8px;color:#3a7d3a;font-weight:bold;transform:scaleX(0.8600);">7</span>
<svg class="b" style="left:135.6px;top:411.6px;" width="15.4" height="15.4" viewBox="0 0 16 16"><path d="M9.9 0.2 L15.8 6.1 Q15.3 7.6 13.8 7.1 L12.9 6.9 L10.6 9.2 L10.9 12.6 L9.2 14 L2 6.8 L3.4 5.1 L6.8 5.4 L9.1 3.1 L8.9 2.2 Q8.4 0.7 9.9 0.2Z" fill="#48c2cf"/><path d="M5.6 10.4 L1 15" stroke="#6f6f6f" stroke-width="1.3" fill="none"/></svg>
<div class="b" style="left:205px;top:409px;width:194px;height:27px;background:#c8c8c8;"></div>
<div class="b" style="left:205px;top:436px;width:194px;height:1px;background:#b6b6b6;"></div>
<span class="t" style="left:237.2px;top:413.2px;font-size:16.3px;color:#000;transform:scaleX(0.9344);">Stage 1</span>
<span class="t" style="left:402.5px;top:413.2px;font-size:16.3px;color:#000;transform:scaleX(0.9500);">10 days</span>
<span class="t" style="left:509.5px;top:413.2px;font-size:16.3px;color:#000;">Wed 17.03.21</span>
<span class="t" style="left:616.5px;top:413.2px;font-size:16.3px;color:#000;">Wed 31.03.21</span>
<div class="b" style="left:30px;top:464px;width:829px;height:1px;background:#d6d6d6;"></div>
<div class="b" style="left:30px;top:437px;width:48px;height:27px;background:#d2d2d2;"></div>
<span class="t" style="left:51.0px;top:441.1px;font-size:15.8px;color:#3a7d3a;font-weight:bold;transform:scaleX(0.8600);">8</span>
<svg class="b" style="left:135.6px;top:439.6px;" width="15.4" height="15.4" viewBox="0 0 16 16"><path d="M9.9 0.2 L15.8 6.1 Q15.3 7.6 13.8 7.1 L12.9 6.9 L10.6 9.2 L10.9 12.6 L9.2 14 L2 6.8 L3.4 5.1 L6.8 5.4 L9.1 3.1 L8.9 2.2 Q8.4 0.7 9.9 0.2Z" fill="#48c2cf"/><path d="M5.6 10.4 L1 15" stroke="#6f6f6f" stroke-width="1.3" fill="none"/></svg>
<div class="b" style="left:205px;top:437px;width:194px;height:27px;background:#c8c8c8;"></div>
<div class="b" style="left:205px;top:464px;width:194px;height:1px;background:#b6b6b6;"></div>
<span class="t" style="left:237.2px;top:441.2px;font-size:16.3px;color:#000;transform:scaleX(0.9344);">Stage 2</span>
<span class="t" style="left:402.5px;top:441.2px;font-size:16.3px;color:#000;transform:scaleX(0.9500);">5 days</span>
<span class="t" style="left:509.5px;top:441.2px;font-size:16.3px;color:#000;">Wed 31.03.21</span>
<span class="t" style="left:616.5px;top:441.2px;font-size:16.3px;color:#000;">Tue 06.04.21</span>
<div class="b" style="left:30px;top:492px;width:829px;height:1px;background:#d6d6d6;"></div>
<div class="b" style="left:30px;top:465px;width:48px;height:27px;background:#d2d2d2;"></div>
<span class="t" style="left:51.0px;top:469.1px;font-size:15.8px;color:#3a7d3a;font-weight:bold;transform:scaleX(0.8600);">9</span>
<svg class="b" style="left:135.6px;top:467.6px;" width="15.4" height="15.4" viewBox="0 0 16 16"><path d="M9.9 0.2 L15.8 6.1 Q15.3 7.6 13.8 7.1 L12.9 6.9 L10.6 9.2 L10.9 12.6 L9.2 14 L2 6.8 L3.4 5.1 L6.8 5.4 L9.1 3.1 L8.9 2.2 Q8.4 0.7 9.9 0.2Z" fill="#48c2cf"/><path d="M5.6 10.4 L1 15" stroke="#6f6f6f" stroke-width="1.3" fill="none"/></svg>
<div class="b" style="left:506px;top:465px;width:214px;height:27px;background:#edf0fb;"></div>
<div class="b" style="left:613px;top:465px;width:1px;height:27px;background:#d6d6d6;"></div>
<span class="t" style="left:237.2px;top:469.2px;font-size:16.3px;color:#000;transform:scaleX(1.0118);">Report</span>
<span class="t" style="left:402.5px;top:469.2px;font-size:16.3px;color:#000;transform:scaleX(0.9500);">0 days</span>
<span class="t" style="left:509.5px;top:469.2px;font-size:16.3px;color:#000;">Wed 07.04.21</span>
<span class="t" style="left:616.5px;top:469.2px;font-size:16.3px;color:#000;">Wed 07.04.21</span>
<div class="b" style="left:30px;top:520px;width:829px;height:1px;background:#d6d6d6;"></div>
<span class="t" style="left:47.2px;top:497.1px;font-size:15.8px;color:#6e6e6e;transform:scaleX(0.8600);">10</span>
<svg class="b" style="left:135.6px;top:495.6px;" width="15.4" height="15.4" viewBox="0 0 16 16"><path d="M9.9 0.2 L15.8 6.1 Q15.3 7.6 13.8 7.1 L12.9 6.9 L10.6 9.2 L10.9 12.6 L9.2 14 L2 6.8 L3.4 5.1 L6.8 5.4 L9.1 3.1 L8.9 2.2 Q8.4 0.7 9.9 0.2Z" fill="#48c2cf"/><path d="M5.6 10.4 L1 15" stroke="#6f6f6f" stroke-width="1.3" fill="none"/></svg>
<span class="t" style="left:221.5px;top:497.2px;font-size:16.3px;color:#000;font-weight:bold;transform:scaleX(0.9519);">Features&amp;Functions</span>
<svg class="b" style="left:207.7px;top:500.7px;" width="8" height="8" viewBox="0 0 8 8"><path d="M6.5 1v5.5h-5.5z" fill="#404040"/></svg>
<span class="t" style="left:402.5px;top:497.2px;font-size:16.3px;color:#000;font-weight:bold;transform:scaleX(0.9500);">9 days</span>
<span class="t" style="left:509.5px;top:497.2px;font-size:16.3px;color:#000;font-weight:bold;">Wed 17.03.21</span>
<span class="t" style="left:616.5px;top:497.2px;font-size:16.3px;color:#000;font-weight:bold;">Mon 29.03.21</span>
<div class="b" style="left:30px;top:548px;width:829px;height:1px;background:#d6d6d6;"></div>
<span class="t" style="left:47.7px;top:525.1px;font-size:15.8px;color:#6e6e6e;transform:scaleX(0.8600);">11</span>
<svg class="b" style="left:133.6px;top:523.2px;" width="13.6" height="13.6" viewBox="0 0 16 16"><path d="M9.9 0.2 L15.8 6.1 Q15.3 7.6 13.8 7.1 L12.9 6.9 L10.6 9.2 L10.9 12.6 L9.2 14 L2 6.8 L3.4 5.1 L6.8 5.4 L9.1 3.1 L8.9 2.2 Q8.4 0.7 9.9 0.2Z" fill="#48c2cf"/><path d="M5.6 10.4 L1 15" stroke="#6f6f6f" stroke-width="1.3" fill="none"/></svg>
<span class="t" style="left:143.0px;top:526.8px;font-size:18px;color:#4a7aaa;font-weight:bold;transform:scaleX(0.8800);text-shadow:0 0 1.5px #fff,0 0 1.5px #fff,-1px 0 1px #fff,0 -1px 1px #fff;">?</span>
<span class="t" style="left:237.2px;top:525.2px;font-size:16.3px;color:#000;transform:scaleX(1.0052);">Required Materials</span>
<span class="t" style="left:402.5px;top:525.2px;font-size:16.3px;color:#000;transform:scaleX(0.9500);">5 days</span>
<div class="b" style="left:30px;top:576px;width:829px;height:1px;background:#d6d6d6;"></div>
<span class="t" style="left:47.2px;top:553.1px;font-size:15.8px;color:#6e6e6e;transform:scaleX(0.8600);">12</span>
<svg class="b" style="left:133.6px;top:551.2px;" width="13.6" height="13.6" viewBox="0 0 16 16"><path d="M9.9 0.2 L15.8 6.1 Q15.3 7.6 13.8 7.1 L12.9 6.9 L10.6 9.2 L10.9 12.6 L9.2 14 L2 6.8 L3.4 5.1 L6.8 5.4 L9.1 3.1 L8.9 2.2 Q8.4 0.7 9.9 0.2Z" fill="#48c2cf"/><path d="M5.6 10.4 L1 15" stroke="#6f6f6f" stroke-width="1.3" fill="none"/></svg>
<span class="t" style="left:143.0px;top:554.8px;font-size:18px;color:#4a7aaa;font-weight:bold;transform:scaleX(0.8800);text-shadow:0 0 1.5px #fff,0 0 1.5px #fff,-1px 0 1px #fff,0 -1px 1px #fff;">?</span>
<span class="t" style="left:237.2px;top:553.2px;font-size:16.3px;color:#000;">Required Methods</span>
<span class="t" style="left:402.5px;top:553.2px;font-size:16.3px;color:#000;transform:scaleX(0.9500);">4 days</span>
<div class="b" style="left:30px;top:604px;width:829px;height:1px;background:#d6d6d6;"></div>
<span class="t" style="left:47.2px;top:581.1px;font-size:15.8px;color:#6e6e6e;transform:scaleX(0.8600);">13</span>
<svg class="b" style="left:135.6px;top:579.6px;" width="15.4" height="15.4" viewBox="0 0 16 16"><path d="M9.9 0.2 L15.8 6.1 Q15.3 7.6 13.8 7.1 L12.9 6.9 L10.6 9.2 L10.9 12.6 L9.2 14 L2 6.8 L3.4 5.1 L6.8 5.4 L9.1 3.1 L8.9 2.2 Q8.4 0.7 9.9 0.2Z" fill="#48c2cf"/><path d="M5.6 10.4 L1 15" stroke="#6f6f6f" stroke-width="1.3" fill="none"/></svg>
<span class="t" style="left:221.5px;top:581.2px;font-size:16.3px;color:#000;font-weight:bold;transform:scaleX(0.9531);">Budget</span>
<svg class="b" style="left:207.7px;top:584.7px;" width="8" height="8" viewBox="0 0 8 8"><path d="M6.5 1v5.5h-5.5z" fill="#404040"/></svg>
<span class="t" style="left:402.5px;top:581.2px;font-size:16.3px;color:#000;font-weight:bold;transform:scaleX(0.9500);">11 days</span>
<span class="t" style="left:509.5px;top:581.2px;font-size:16.3px;color:#000;font-weight:bold;transform:scaleX(0.9572);">Fri 19.03.21</span>
<span class="t" style="left:616.5px;top:581.2px;font-size:16.3px;color:#000;font-weight:bold;">Mon 05.04.21</span>
<div class="b" style="left:30px;top:632px;width:829px;height:1px;background:#d6d6d6;"></div>
<span class="t" style="left:47.2px;top:609.1px;font-size:15.8px;color:#6e6e6e;transform:scaleX(0.8600);">14</span>
<svg class="b" style="left:133.6px;top:607.2px;" width="13.6" height="13.6" viewBox="0 0 16 16"><path d="M9.9 0.2 L15.8 6.1 Q15.3 7.6 13.8 7.1 L12.9 6.9 L10.6 9.2 L10.9 12.6 L9.2 14 L2 6.8 L3.4 5.1 L6.8 5.4 L9.1 3.1 L8.9 2.2 Q8.4 0.7 9.9 0.2Z" fill="#48c2cf"/><path d="M5.6 10.4 L1 15" stroke="#6f6f6f" stroke-width="1.3" fill="none"/></svg>
<span class="t" style="left:143.0px;top:610.8px;font-size:18px;color:#4a7aaa;font-weight:bold;transform:scaleX(0.8800);text-shadow:0 0 1.5px #fff,0 0 1.5px #fff,-1px 0 1px #fff,0 -1px 1px #fff;">?</span>
<span class="t" style="left:237.2px;top:609.2px;font-size:16.3px;color:#000;transform:scaleX(1.0060);">Work with Sponsors</span>
<span class="t" style="left:402.5px;top:609.2px;font-size:16.3px;color:#000;transform:scaleX(0.9500);">11 days</span>
<div class="b" style="left:30px;top:660px;width:829px;height:1px;background:#d6d6d6;"></div>
<span class="t" style="left:47.2px;top:637.1px;font-size:15.8px;color:#6e6e6e;transform:scaleX(0.8600);">15</span>
<svg class="b" style="left:133.6px;top:635.2px;" width="13.6" height="13.6" viewBox="0 0 16 16"><path d="M9.9 0.2 L15.8 6.1 Q15.3 7.6 13.8 7.1 L12.9 6.9 L10.6 9.2 L10.9 12.6 L9.2 14 L2 6.8 L3.4 5.1 L6.8 5.4 L9.1 3.1 L8.9 2.2 Q8.4 0.7 9.9 0.2Z" fill="#48c2cf"/><path d="M5.6 10.4 L1 15" stroke="#6f6f6f" stroke-width="1.3" fill="none"/></svg>
<span class="t" style="left:143.0px;top:638.8px;font-size:18px;color:#4a7aaa;font-weight:bold;transform:scaleX(0.8800);text-shadow:0 0 1.5px #fff,0 0 1.5px #fff,-1px 0 1px #fff,0 -1px 1px #fff;">?</span>
<span class="t" style="left:237.2px;top:637.2px;font-size:16.3px;color:#000;transform:scaleX(1.0470);">Work with Contractor</span>
<span class="t" style="left:402.5px;top:637.2px;font-size:16.3px;color:#000;transform:scaleX(0.9500);">11 days</span>
<div class="b" style="left:30px;top:688px;width:829px;height:1px;background:#d6d6d6;"></div>
<span class="t" style="left:47.2px;top:665.1px;font-size:15.8px;color:#6e6e6e;transform:scaleX(0.8600);">16</span>
<svg class="b" style="left:133.6px;top:663.2px;" width="13.6" height="13.6" viewBox="0 0 16 16"><path d="M9.9 0.2 L15.8 6.1 Q15.3 7.6 13.8 7.1 L12.9 6.9 L10.6 9.2 L10.9 12.6 L9.2 14 L2 6.8 L3.4 5.1 L6.8 5.4 L9.1 3.1 L8.9 2.2 Q8.4 0.7 9.9 0.2Z" fill="#48c2cf"/><path d="M5.6 10.4 L1 15" stroke="#6f6f6f" stroke-width="1.3" fill="none"/></svg>
<span class="t" style="left:143.0px;top:666.8px;font-size:18px;color:#4a7aaa;font-weight:bold;transform:scaleX(0.8800);text-shadow:0 0 1.5px #fff,0 0 1.5px #fff,-1px 0 1px #fff,0 -1px 1px #fff;">?</span>
<span class="t" style="left:237.2px;top:665.2px;font-size:16.3px;color:#000;">Model Product Life Cy</span>
<span class="t" style="left:402.5px;top:665.2px;font-size:16.3px;color:#000;transform:scaleX(0.9500);">11 days</span>
<div class="b" style="left:30px;top:716px;width:829px;height:1px;background:#d6d6d6;"></div>
<span class="t" style="left:47.2px;top:693.1px;font-size:15.8px;color:#6e6e6e;transform:scaleX(0.8600);">17</span>
<svg class="b" style="left:135.6px;top:691.6px;" width="15.4" height="15.4" viewBox="0 0 16 16"><path d="M9.9 0.2 L15.8 6.1 Q15.3 7.6 13.8 7.1 L12.9 6.9 L10.6 9.2 L10.9 12.6 L9.2 14 L2 6.8 L3.4 5.1 L6.8 5.4 L9.1 3.1 L8.9 2.2 Q8.4 0.7 9.9 0.2Z" fill="#48c2cf"/><path d="M5.6 10.4 L1 15" stroke="#6f6f6f" stroke-width="1.3" fill="none"/></svg>
<span class="t" style="left:221.5px;top:693.2px;font-size:16.3px;color:#000;font-weight:bold;transform:scaleX(0.9400);">Pricing Strategy</span>
<svg class="b" style="left:210px;top:698px;" width="8" height="10" viewBox="0 0 8 10"><path d="M1 1l4.5 4-4.5 4z" fill="#fff" stroke="#8a8a8a" stroke-width="1"/></svg>
<span class="t" style="left:402.5px;top:693.2px;font-size:16.3px;color:#000;font-weight:bold;transform:scaleX(0.9500);">8 days</span>
<span class="t" style="left:509.5px;top:693.2px;font-size:16.3px;color:#000;font-weight:bold;transform:scaleX(0.9572);">Fri 19.03.21</span>
<span class="t" style="left:616.5px;top:693.2px;font-size:16.3px;color:#000;font-weight:bold;">Tue 30.03.21</span>
<div class="b" style="left:30px;top:744px;width:829px;height:1px;background:#d6d6d6;"></div>
<span class="t" style="left:47.2px;top:721.1px;font-size:15.8px;color:#6e6e6e;transform:scaleX(0.8600);">20</span>
<svg class="b" style="left:133.6px;top:719.2px;" width="13.6" height="13.6" viewBox="0 0 16 16"><path d="M9.9 0.2 L15.8 6.1 Q15.3 7.6 13.8 7.1 L12.9 6.9 L10.6 9.2 L10.9 12.6 L9.2 14 L2 6.8 L3.4 5.1 L6.8 5.4 L9.1 3.1 L8.9 2.2 Q8.4 0.7 9.9 0.2Z" fill="#48c2cf"/><path d="M5.6 10.4 L1 15" stroke="#6f6f6f" stroke-width="1.3" fill="none"/></svg>
<span class="t" style="left:143.0px;top:722.8px;font-size:18px;color:#4a7aaa;font-weight:bold;transform:scaleX(0.8800);text-shadow:0 0 1.5px #fff,0 0 1.5px #fff,-1px 0 1px #fff,0 -1px 1px #fff;">?</span>
<span class="t" style="left:221.5px;top:721.2px;font-size:16.3px;color:#000;font-weight:bold;">Marketing&amp;Promotion</span>
<div class="b" style="left:30px;top:792px;width:829px;height:1px;background:#d6d6d6;"></div>
<span class="t" style="left:47.2px;top:749.1px;font-size:15.8px;color:#6e6e6e;transform:scaleX(0.8600);">21</span>
<svg class="b" style="left:135.6px;top:747.6px;" width="15.4" height="15.4" viewBox="0 0 16 16"><path d="M9.9 0.2 L15.8 6.1 Q15.3 7.6 13.8 7.1 L12.9 6.9 L10.6 9.2 L10.9 12.6 L9.2 14 L2 6.8 L3.4 5.1 L6.8 5.4 L9.1 3.1 L8.9 2.2 Q8.4 0.7 9.9 0.2Z" fill="#48c2cf"/><path d="M5.6 10.4 L1 15" stroke="#6f6f6f" stroke-width="1.3" fill="none"/></svg>
<span class="t" style="left:221.5px;top:749.2px;font-size:16.3px;color:#000;font-weight:bold;transform:scaleX(0.9460);">Sales &amp; Distribution</span>
<span class="t" style="left:221.5px;top:771.2px;font-size:16.3px;color:#000;font-weight:bold;transform:scaleX(0.9660);">Strategy</span>
<svg class="b" style="left:207.7px;top:752.7px;" width="8" height="8" viewBox="0 0 8 8"><path d="M6.5 1v5.5h-5.5z" fill="#404040"/></svg>
<span class="t" style="left:402.5px;top:749.2px;font-size:16.3px;color:#000;font-weight:bold;transform:scaleX(0.9500);">16 days</span>
<span class="t" style="left:509.5px;top:749.2px;font-size:16.3px;color:#000;font-weight:bold;transform:scaleX(0.9572);">Fri 19.03.21</span>
<span class="t" style="left:616.5px;top:749.2px;font-size:16.3px;color:#000;font-weight:bold;transform:scaleX(0.9572);">Fri 09.04.21</span>
<div class="b" style="left:30px;top:820px;width:829px;height:1px;background:#d6d6d6;"></div>
<span class="t" style="left:47.2px;top:797.1px;font-size:15.8px;color:#6e6e6e;transform:scaleX(0.8600);">22</span>
<svg class="b" style="left:135.6px;top:795.6px;" width="15.4" height="15.4" viewBox="0 0 16 16"><path d="M9.9 0.2 L15.8 6.1 Q15.3 7.6 13.8 7.1 L12.9 6.9 L10.6 9.2 L10.9 12.6 L9.2 14 L2 6.8 L3.4 5.1 L6.8 5.4 L9.1 3.1 L8.9 2.2 Q8.4 0.7 9.9 0.2Z" fill="#48c2cf"/><path d="M5.6 10.4 L1 15" stroke="#6f6f6f" stroke-width="1.3" fill="none"/></svg>
<span class="t" style="left:237.2px;top:797.2px;font-size:16.3px;color:#000;transform:scaleX(0.9344);">Stage 1</span>
<span class="t" style="left:402.5px;top:797.2px;font-size:16.3px;color:#000;transform:scaleX(0.9500);">7 days</span>
<span class="t" style="left:509.5px;top:797.2px;font-size:16.3px;color:#000;transform:scaleX(0.9773);">Fri 19.03.21</span>
<span class="t" style="left:616.5px;top:797.2px;font-size:16.3px;color:#000;">Mon 29.03.21</span>
<div class="b" style="left:30px;top:848px;width:829px;height:1px;background:#d6d6d6;"></div>
<span class="t" style="left:47.2px;top:825.1px;font-size:15.8px;color:#6e6e6e;transform:scaleX(0.8600);">23</span>
<svg class="b" style="left:135.6px;top:823.6px;" width="15.4" height="15.4" viewBox="0 0 16 16"><path d="M9.9 0.2 L15.8 6.1 Q15.3 7.6 13.8 7.1 L12.9 6.9 L10.6 9.2 L10.9 12.6 L9.2 14 L2 6.8 L3.4 5.1 L6.8 5.4 L9.1 3.1 L8.9 2.2 Q8.4 0.7 9.9 0.2Z" fill="#48c2cf"/><path d="M5.6 10.4 L1 15" stroke="#6f6f6f" stroke-width="1.3" fill="none"/></svg>
<span class="t" style="left:237.2px;top:825.2px;font-size:16.3px;color:#000;transform:scaleX(0.9344);">Stage 2</span>
<span class="t" style="left:402.5px;top:825.2px;font-size:16.3px;color:#000;transform:scaleX(0.9500);">5 days</span>
<span class="t" style="left:509.5px;top:825.2px;font-size:16.3px;color:#000;">Mon 29.03.21</span>
<span class="t" style="left:616.5px;top:825.2px;font-size:16.3px;color:#000;transform:scaleX(0.9773);">Fri 02.04.21</span>
<div class="b" style="left:30px;top:876px;width:829px;height:1px;background:#d6d6d6;"></div>
<span class="t" style="left:47.2px;top:853.1px;font-size:15.8px;color:#6e6e6e;transform:scaleX(0.8600);">24</span>
<svg class="b" style="left:135.6px;top:851.6px;" width="15.4" height="15.4" viewBox="0 0 16 16"><path d="M9.9 0.2 L15.8 6.1 Q15.3 7.6 13.8 7.1 L12.9 6.9 L10.6 9.2 L10.9 12.6 L9.2 14 L2 6.8 L3.4 5.1 L6.8 5.4 L9.1 3.1 L8.9 2.2 Q8.4 0.7 9.9 0.2Z" fill="#48c2cf"/><path d="M5.6 10.4 L1 15" stroke="#6f6f6f" stroke-width="1.3" fill="none"/></svg>
<span class="t" style="left:237.2px;top:853.2px;font-size:16.3px;color:#000;transform:scaleX(0.9344);">Stage 3</span>
<span class="t" style="left:402.5px;top:853.2px;font-size:16.3px;color:#000;transform:scaleX(0.9500);">6 days</span>
<span class="t" style="left:509.5px;top:853.2px;font-size:16.3px;color:#000;transform:scaleX(0.9773);">Fri 02.04.21</span>
<span class="t" style="left:616.5px;top:853.2px;font-size:16.3px;color:#000;transform:scaleX(0.9773);">Fri 09.04.21</span>
<div class="b" style="left:30px;top:904px;width:829px;height:1px;background:#d6d6d6;"></div>
<span class="t" style="left:47.2px;top:881.1px;font-size:15.8px;color:#6e6e6e;transform:scaleX(0.8600);">25</span>
<svg class="b" style="left:135.6px;top:879.6px;" width="15.4" height="15.4" viewBox="0 0 16 16"><path d="M9.9 0.2 L15.8 6.1 Q15.3 7.6 13.8 7.1 L12.9 6.9 L10.6 9.2 L10.9 12.6 L9.2 14 L2 6.8 L3.4 5.1 L6.8 5.4 L9.1 3.1 L8.9 2.2 Q8.4 0.7 9.9 0.2Z" fill="#48c2cf"/><path d="M5.6 10.4 L1 15" stroke="#6f6f6f" stroke-width="1.3" fill="none"/></svg>
<span class="t" style="left:221.5px;top:881.2px;font-size:16.3px;color:#000;transform:scaleX(0.9448);">Release</span>
<span class="t" style="left:402.5px;top:881.2px;font-size:16.3px;color:#000;transform:scaleX(0.9500);">0 days</span>
<span class="t" style="left:509.5px;top:881.2px;font-size:16.3px;color:#000;">Mon 12.04.21</span>
<span class="t" style="left:616.5px;top:881.2px;font-size:16.3px;color:#000;">Mon 12.04.21</span>
<div class="b" style="left:30px;top:932px;width:829px;height:1px;background:#d6d6d6;"></div>
<div class="b" style="left:30px;top:960px;width:829px;height:1px;background:#d6d6d6;"></div>
<div class="b" style="left:30px;top:988px;width:829px;height:1px;background:#d6d6d6;"></div>
<div class="b" style="left:78px;top:381px;width:2px;height:112px;background:#3a7d3a;"></div>
<div class="b" style="left:79px;top:464px;width:1783px;height:1px;background:#5a5a5a;"></div>
<div class="b" style="left:30px;top:492px;width:1832px;height:1px;background:#5a5a5a;"></div>
<div class="b" style="left:859px;top:195px;width:5px;height:787px;background:#d9d9d9;"></div>
<div class="b" style="left:859px;top:195px;width:1px;height:787px;background:#c2c2c2;"></div>
<div class="b" style="left:863px;top:195px;width:1px;height:787px;background:#c2c2c2;"></div>
<div class="b" style="left:864px;top:241px;width:1003px;height:741px;background:#fff;"></div>
<div class="b" style="left:864px;top:197px;width:1003px;height:43px;background:#e6e6e6;"></div>
<div class="b" style="left:864px;top:240px;width:1003px;height:1px;background:#bdbdbd;"></div>
<div class="b" style="left:988px;top:241px;width:50px;height:741px;background:#f6f6f6;"></div>
<div class="b" style="left:1163px;top:241px;width:50px;height:741px;background:#f6f6f6;"></div>
<div class="b" style="left:1338px;top:241px;width:50px;height:741px;background:#f6f6f6;"></div>
<div class="b" style="left:1513px;top:241px;width:50px;height:741px;background:#f6f6f6;"></div>
<div class="b" style="left:1688px;top:241px;width:50px;height:741px;background:#f6f6f6;"></div>
<div class="b" style="left:1863px;top:241px;width:50px;height:741px;background:#f6f6f6;"></div>
<div class="b" style="left:1862px;top:241px;width:5px;height:741px;background:#f3f3f3;"></div>
<span class="t" style="left:869.0px;top:200.8px;font-size:13.2px;color:#757575;transform:scaleX(1.0089);">01 Mar &#x27;21</span>
<span class="t" style="left:870.7px;top:220.8px;font-size:13.2px;color:#757575;transform:scaleX(0.9700);">M</span>
<div class="b" style="left:888px;top:224px;width:1px;height:16px;background:#d2d2d2;"></div>
<span class="t" style="left:897.1px;top:220.8px;font-size:13.2px;color:#757575;transform:scaleX(0.9700);">T</span>
<div class="b" style="left:913px;top:224px;width:1px;height:16px;background:#d2d2d2;"></div>
<span class="t" style="left:920.0px;top:220.8px;font-size:13.2px;color:#757575;transform:scaleX(0.9700);">W</span>
<div class="b" style="left:938px;top:224px;width:1px;height:16px;background:#d2d2d2;"></div>
<span class="t" style="left:947.1px;top:220.8px;font-size:13.2px;color:#757575;transform:scaleX(0.9700);">T</span>
<div class="b" style="left:963px;top:224px;width:1px;height:16px;background:#d2d2d2;"></div>
<span class="t" style="left:972.1px;top:220.8px;font-size:13.2px;color:#757575;transform:scaleX(0.9700);">F</span>
<div class="b" style="left:988px;top:224px;width:1px;height:16px;background:#d2d2d2;"></div>
<span class="t" style="left:996.7px;top:220.8px;font-size:13.2px;color:#757575;transform:scaleX(0.9700);">S</span>
<div class="b" style="left:1013px;top:224px;width:1px;height:16px;background:#d2d2d2;"></div>
<span class="t" style="left:1021.7px;top:220.8px;font-size:13.2px;color:#757575;transform:scaleX(0.9700);">S</span>
<div class="b" style="left:1038px;top:201px;width:1px;height:39px;background:#cfcfcf;"></div>
<span class="t" style="left:1044.0px;top:200.8px;font-size:13.2px;color:#757575;transform:scaleX(1.0089);">08 Mar &#x27;21</span>
<span class="t" style="left:1045.7px;top:220.8px;font-size:13.2px;color:#757575;transform:scaleX(0.9700);">M</span>
<div class="b" style="left:1063px;top:224px;width:1px;height:16px;background:#d2d2d2;"></div>
<span class="t" style="left:1072.1px;top:220.8px;font-size:13.2px;color:#757575;transform:scaleX(0.9700);">T</span>
<div class="b" style="left:1088px;top:224px;width:1px;height:16px;background:#d2d2d2;"></div>
<span class="t" style="left:1095.0px;top:220.8px;font-size:13.2px;color:#757575;transform:scaleX(0.9700);">W</span>
<div class="b" style="left:1113px;top:224px;width:1px;height:16px;background:#d2d2d2;"></div>
<span class="t" style="left:1122.1px;top:220.8px;font-size:13.2px;color:#757575;transform:scaleX(0.9700);">T</span>
<div class="b" style="left:1138px;top:224px;width:1px;height:16px;background:#d2d2d2;"></div>
<span class="t" style="left:1147.1px;top:220.8px;font-size:13.2px;color:#757575;transform:scaleX(0.9700);">F</span>
<div class="b" style="left:1163px;top:224px;width:1px;height:16px;background:#d2d2d2;"></div>
<span class="t" style="left:1171.7px;top:220.8px;font-size:13.2px;color:#757575;transform:scaleX(0.9700);">S</span>
<div class="b" style="left:1188px;top:224px;width:1px;height:16px;background:#d2d2d2;"></div>
<span class="t" style="left:1196.7px;top:220.8px;font-size:13.2px;color:#757575;transform:scaleX(0.9700);">S</span>
<div class="b" style="left:1213px;top:201px;width:1px;height:39px;background:#cfcfcf;"></div>
<span class="t" style="left:1219.0px;top:200.8px;font-size:13.2px;color:#757575;transform:scaleX(1.0089);">15 Mar &#x27;21</span>
<span class="t" style="left:1220.7px;top:220.8px;font-size:13.2px;color:#757575;transform:scaleX(0.9700);">M</span>
<div class="b" style="left:1238px;top:224px;width:1px;height:16px;background:#d2d2d2;"></div>
<span class="t" style="left:1247.1px;top:220.8px;font-size:13.2px;color:#757575;transform:scaleX(0.9700);">T</span>
<div class="b" style="left:1263px;top:224px;width:1px;height:16px;background:#d2d2d2;"></div>
<span class="t" style="left:1270.0px;top:220.8px;font-size:13.2px;color:#757575;transform:scaleX(0.9700);">W</span>
<div class="b" style="left:1288px;top:224px;width:1px;height:16px;background:#d2d2d2;"></div>
<span class="t" style="left:1297.1px;top:220.8px;font-size:13.2px;color:#757575;transform:scaleX(0.9700);">T</span>
<div class="b" style="left:1313px;top:224px;width:1px;height:16px;background:#d2d2d2;"></div>
<span class="t" style="left:1322.1px;top:220.8px;font-size:13.2px;color:#757575;transform:scaleX(0.9700);">F</span>
<div class="b" style="left:1338px;top:224px;width:1px;height:16px;background:#d2d2d2;"></div>
<span class="t" style="left:1346.7px;top:220.8px;font-size:13.2px;color:#757575;transform:scaleX(0.9700);">S</span>
<div class="b" style="left:1363px;top:224px;width:1px;height:16px;background:#d2d2d2;"></div>
<span class="t" style="left:1371.7px;top:220.8px;font-size:13.2px;color:#757575;transform:scaleX(0.9700);">S</span>
<div class="b" style="left:1388px;top:201px;width:1px;height:39px;background:#cfcfcf;"></div>
<span class="t" style="left:1394.0px;top:200.8px;font-size:13.2px;color:#757575;transform:scaleX(1.0089);">22 Mar &#x27;21</span>
<span class="t" style="left:1395.7px;top:220.8px;font-size:13.2px;color:#757575;transform:scaleX(0.9700);">M</span>
<div class="b" style="left:1413px;top:224px;width:1px;height:16px;background:#d2d2d2;"></div>
<span class="t" style="left:1422.1px;top:220.8px;font-size:13.2px;color:#757575;transform:scaleX(0.9700);">T</span>
<div class="b" style="left:1438px;top:224px;width:1px;height:16px;background:#d2d2d2;"></div>
<span class="t" style="left:1445.0px;top:220.8px;font-size:13.2px;color:#757575;transform:scaleX(0.9700);">W</span>
<div class="b" style="left:1463px;top:224px;width:1px;height:16px;background:#d2d2d2;"></div>
<span class="t" style="left:1472.1px;top:220.8px;font-size:13.2px;color:#757575;transform:scaleX(0.9700);">T</span>
<div class="b" style="left:1488px;top:224px;width:1px;height:16px;background:#d2d2d2;"></div>
<span class="t" style="left:1497.1px;top:220.8px;font-size:13.2px;color:#757575;transform:scaleX(0.9700);">F</span>
<div class="b" style="left:1513px;top:224px;width:1px;height:16px;background:#d2d2d2;"></div>
<span class="t" style="left:1521.7px;top:220.8px;font-size:13.2px;color:#757575;transform:scaleX(0.9700);">S</span>
<div class="b" style="left:1538px;top:224px;width:1px;height:16px;background:#d2d2d2;"></div>
<span class="t" style="left:1546.7px;top:220.8px;font-size:13.2px;color:#757575;transform:scaleX(0.9700);">S</span>
<div class="b" style="left:1563px;top:201px;width:1px;height:39px;background:#cfcfcf;"></div>
<span class="t" style="left:1569.0px;top:200.8px;font-size:13.2px;color:#757575;transform:scaleX(1.0089);">29 Mar &#x27;21</span>
<span class="t" style="left:1570.7px;top:220.8px;font-size:13.2px;color:#757575;transform:scaleX(0.9700);">M</span>
<div class="b" style="left:1588px;top:224px;width:1px;height:16px;background:#d2d2d2;"></div>
<span class="t" style="left:1597.1px;top:220.8px;font-size:13.2px;color:#757575;transform:scaleX(0.9700);">T</span>
<div class="b" style="left:1613px;top:224px;width:1px;height:16px;background:#d2d2d2;"></div>
<span class="t" style="left:1620.0px;top:220.8px;font-size:13.2px;color:#757575;transform:scaleX(0.9700);">W</span>
<div class="b" style="left:1638px;top:224px;width:1px;height:16px;background:#d2d2d2;"></div>
<span class="t" style="left:1647.1px;top:220.8px;font-size:13.2px;color:#757575;transform:scaleX(0.9700);">T</span>
<div class="b" style="left:1663px;top:224px;width:1px;height:16px;background:#d2d2d2;"></div>
<span class="t" style="left:1672.1px;top:220.8px;font-size:13.2px;color:#757575;transform:scaleX(0.9700);">F</span>
<div class="b" style="left:1688px;top:224px;width:1px;height:16px;background:#d2d2d2;"></div>
<span class="t" style="left:1696.7px;top:220.8px;font-size:13.2px;color:#757575;transform:scaleX(0.9700);">S</span>
<div class="b" style="left:1713px;top:224px;width:1px;height:16px;background:#d2d2d2;"></div>
<span class="t" style="left:1721.7px;top:220.8px;font-size:13.2px;color:#757575;transform:scaleX(0.9700);">S</span>
<div class="b" style="left:1738px;top:201px;width:1px;height:39px;background:#cfcfcf;"></div>
<span class="t" style="left:1744.0px;top:200.8px;font-size:13.2px;color:#757575;transform:scaleX(1.0588);">05 Apr &#x27;21</span>
<span class="t" style="left:1745.7px;top:220.8px;font-size:13.2px;color:#757575;transform:scaleX(0.9700);">M</span>
<div class="b" style="left:1763px;top:224px;width:1px;height:16px;background:#d2d2d2;"></div>
<span class="t" style="left:1772.1px;top:220.8px;font-size:13.2px;color:#757575;transform:scaleX(0.9700);">T</span>
<div class="b" style="left:1788px;top:224px;width:1px;height:16px;background:#d2d2d2;"></div>
<span class="t" style="left:1795.0px;top:220.8px;font-size:13.2px;color:#757575;transform:scaleX(0.9700);">W</span>
<div class="b" style="left:1813px;top:224px;width:1px;height:16px;background:#d2d2d2;"></div>
<span class="t" style="left:1822.1px;top:220.8px;font-size:13.2px;color:#757575;transform:scaleX(0.9700);">T</span>
<div class="b" style="left:1838px;top:224px;width:1px;height:16px;background:#d2d2d2;"></div>
<span class="t" style="left:1847.1px;top:220.8px;font-size:13.2px;color:#757575;transform:scaleX(0.9700);">F</span>
<div class="b" style="left:864px;top:249px;width:394px;height:2px;background:#4d4d4d;"></div>
<div class="b" style="left:1255px;top:249px;width:3px;height:11px;background:#4d4d4d;"></div>
<div class="b" style="left:864px;top:254px;width:391px;height:6px;background:#2f9fa9;"></div>
<div class="b" style="left:864px;top:277px;width:226px;height:11px;background:#77cbd5;"></div>
<div class="b" style="left:1087px;top:277px;width:3px;height:11px;background:#3ba6b0;"></div>
<div class="b" style="left:864px;top:305px;width:276px;height:11px;background:#77cbd5;"></div>
<div class="b" style="left:1137px;top:305px;width:3px;height:11px;background:#3ba6b0;"></div>
<div class="b" style="left:912px;top:333px;width:346px;height:11px;background:#77cbd5;"></div>
<div class="b" style="left:912px;top:333px;width:3px;height:11px;background:#3ba6b0;"></div>
<div class="b" style="left:1255px;top:333px;width:3px;height:11px;background:#3ba6b0;"></div>
<div class="b" style="left:864px;top:361px;width:394px;height:11px;background:#77cbd5;"></div>
<div class="b" style="left:1255px;top:361px;width:3px;height:11px;background:#3ba6b0;"></div>
<div class="b" style="left:1262px;top:389px;width:553px;height:2px;background:#4d4d4d;"></div>
<div class="b" style="left:1262px;top:389px;width:3px;height:11px;background:#4d4d4d;"></div>
<div class="b" style="left:1812px;top:389px;width:3px;height:11px;background:#4d4d4d;"></div>
<div class="b" style="left:1265px;top:394px;width:524px;height:6px;background:#2f9fa9;"></div>
<div class="b" style="left:1262px;top:417px;width:353px;height:11px;background:#77cbd5;"></div>
<div class="b" style="left:1262px;top:417px;width:3px;height:11px;background:#3ba6b0;"></div>
<div class="b" style="left:1612px;top:417px;width:3px;height:11px;background:#3ba6b0;"></div>
<div class="b" style="left:1612px;top:445px;width:171px;height:11px;background:#77cbd5;"></div>
<div class="b" style="left:1612px;top:445px;width:3px;height:11px;background:#3ba6b0;"></div>
<div class="b" style="left:1780px;top:445px;width:3px;height:11px;background:#3ba6b0;"></div>
<div class="b" style="left:1262px;top:501px;width:321px;height:2px;background:#4d4d4d;"></div>
<div class="b" style="left:1262px;top:501px;width:3px;height:11px;background:#4d4d4d;"></div>
<div class="b" style="left:1580px;top:501px;width:3px;height:11px;background:#4d4d4d;"></div>
<div class="b" style="left:1265px;top:506px;width:174px;height:6px;background:#2f9fa9;"></div>
<div class="b" style="left:1264px;top:529px;width:174px;height:11px;background:linear-gradient(90deg,rgba(119,203,213,0) 0,rgba(119,203,213,.55) 4px,#77cbd5 9px,#77cbd5 calc(100% - 9px),rgba(119,203,213,.55) calc(100% - 4px),rgba(119,203,213,0) 100%);"></div>
<div class="b" style="left:1264px;top:557px;width:149px;height:11px;background:linear-gradient(90deg,rgba(119,203,213,0) 0,rgba(119,203,213,.55) 4px,#77cbd5 9px,#77cbd5 calc(100% - 9px),rgba(119,203,213,.55) calc(100% - 4px),rgba(119,203,213,0) 100%);"></div>
<div class="b" style="left:1312px;top:585px;width:428px;height:2px;background:#4d4d4d;"></div>
<div class="b" style="left:1312px;top:585px;width:3px;height:11px;background:#4d4d4d;"></div>
<div class="b" style="left:1737px;top:585px;width:3px;height:11px;background:#4d4d4d;"></div>
<div class="b" style="left:1315px;top:590px;width:422px;height:6px;background:#2f9fa9;"></div>
<div class="b" style="left:1314px;top:613px;width:424px;height:11px;background:linear-gradient(90deg,rgba(119,203,213,0) 0,rgba(119,203,213,.55) 4px,#77cbd5 9px,#77cbd5 calc(100% - 9px),rgba(119,203,213,.55) calc(100% - 4px),rgba(119,203,213,0) 100%);"></div>
<div class="b" style="left:1314px;top:641px;width:424px;height:11px;background:linear-gradient(90deg,rgba(119,203,213,0) 0,rgba(119,203,213,.55) 4px,#77cbd5 9px,#77cbd5 calc(100% - 9px),rgba(119,203,213,.55) calc(100% - 4px),rgba(119,203,213,0) 100%);"></div>
<div class="b" style="left:1314px;top:669px;width:424px;height:11px;background:linear-gradient(90deg,rgba(119,203,213,0) 0,rgba(119,203,213,.55) 4px,#77cbd5 9px,#77cbd5 calc(100% - 9px),rgba(119,203,213,.55) calc(100% - 4px),rgba(119,203,213,0) 100%);"></div>
<div class="b" style="left:1312px;top:697px;width:296px;height:2px;background:#4d4d4d;"></div>
<div class="b" style="left:1312px;top:697px;width:3px;height:11px;background:#4d4d4d;"></div>
<div class="b" style="left:1605px;top:697px;width:3px;height:11px;background:#4d4d4d;"></div>
<div class="b" style="left:1315px;top:702px;width:290px;height:6px;background:#2f9fa9;"></div>
<div class="b" style="left:1312px;top:753px;width:546px;height:2px;background:#4d4d4d;"></div>
<div class="b" style="left:1312px;top:753px;width:3px;height:11px;background:#4d4d4d;"></div>
<div class="b" style="left:1855px;top:753px;width:3px;height:11px;background:#4d4d4d;"></div>
<div class="b" style="left:1315px;top:758px;width:540px;height:6px;background:#2f9fa9;"></div>
<div class="b" style="left:1312px;top:801px;width:271px;height:11px;background:#77cbd5;"></div>
<div class="b" style="left:1312px;top:801px;width:3px;height:11px;background:#3ba6b0;"></div>
<div class="b" style="left:1580px;top:801px;width:3px;height:11px;background:#3ba6b0;"></div>
<div class="b" style="left:1562px;top:829px;width:121px;height:11px;background:#77cbd5;"></div>
<div class="b" style="left:1562px;top:829px;width:3px;height:11px;background:#3ba6b0;"></div>
<div class="b" style="left:1680px;top:829px;width:3px;height:11px;background:#3ba6b0;"></div>
<div class="b" style="left:1662px;top:857px;width:196px;height:11px;background:#77cbd5;"></div>
<div class="b" style="left:1662px;top:857px;width:3px;height:11px;background:#3ba6b0;"></div>
<div class="b" style="left:1855px;top:857px;width:3px;height:11px;background:#3ba6b0;"></div>
<svg class="b" style="left:1610px;top:415px;" width="16" height="32" viewBox="0 0 16 32"><path d="M5 7.5h1.5q1 0 1 1v18" fill="none" stroke="#2f9fa9" stroke-width="1"/><path d="M3 25h9l-4.5 5z" fill="#2f9fa9"/></svg>
<svg class="b" style="left:1778px;top:443px;" width="16" height="32" viewBox="0 0 16 32"><path d="M5 7.5h1.5q1 0 1 1v18" fill="none" stroke="#2f9fa9" stroke-width="1"/><path d="M3 25h9l-4.5 5z" fill="#2f9fa9"/></svg>
<svg class="b" style="left:1782px;top:472px;" width="13" height="13" viewBox="0 0 13 13"><path d="M6.5 0.5L12.5 6.5L6.5 12.5L0.5 6.5Z" fill="#2f9fa9"/></svg>
<span class="t" style="left:1801.5px;top:466.5px;font-size:16px;color:#000;font-weight:bold;transform:scaleX(1.1115);">07.04</span>
<div class="b" style="left:79px;top:464px;width:1783px;height:1px;background:#6e6e6e;"></div>
<div class="b" style="left:30px;top:492px;width:1837px;height:1px;background:#6e6e6e;"></div>
<svg class="b" style="left:584px;top:131px;" width="37" height="34" viewBox="0 0 37 34"><rect x="3.40" y="3.10" width="30.00" height="27.30" rx="2.20" fill="none" stroke="#e0161c" stroke-width="3.2"/></svg>
<svg class="b" style="left:200px;top:376px;" width="203" height="121" viewBox="0 0 203 121"><rect x="3.55" y="3.55" width="195.90" height="113.60" rx="2.05" fill="none" stroke="#e0161c" stroke-width="3.5"/></svg>
<svg class="b" style="left:1249px;top:373px;" width="617" height="121" viewBox="0 0 617 121"><rect x="2.95" y="2.85" width="609.50" height="113.90" rx="1.95" fill="none" stroke="#e0161c" stroke-width="3.7"/></svg>
<div class="b" style="left:588px;top:196px;width:264px;height:188px;background:#fff;border:1px solid #c9c9c9;box-sizing:border-box;box-shadow:0 1px 4px rgba(0,0,0,.18);"></div>
<span class="t" style="left:601.5px;top:207.3px;font-size:15px;color:#4d4d4d;font-weight:bold;transform:scaleX(0.9737);">Link the Selected Tasks (Ctrl+F2)</span>
<span class="t" style="left:601.5px;top:234.3px;font-size:15px;color:#6a6a6a;transform:scaleX(0.9729);">You can link tasks so one can&#x27;t start</span>
<span class="t" style="left:601.5px;top:254.3px;font-size:15px;color:#6a6a6a;transform:scaleX(0.9929);">until the other has finished.</span>
<span class="t" style="left:601.5px;top:294.3px;font-size:15px;color:#6a6a6a;transform:scaleX(0.9786);">You can also link tasks in other</span>
<span class="t" style="left:601.5px;top:314.3px;font-size:15px;color:#6a6a6a;transform:scaleX(0.9736);">ways, such as a Start-to-Start link</span>
<span class="t" style="left:601.5px;top:334.3px;font-size:15px;color:#6a6a6a;transform:scaleX(0.9923);">when two tasks need to start at the</span>
<span class="t" style="left:601.5px;top:354.3px;font-size:15px;color:#6a6a6a;transform:scaleX(0.9816);">same time.</span>
</body></html>
